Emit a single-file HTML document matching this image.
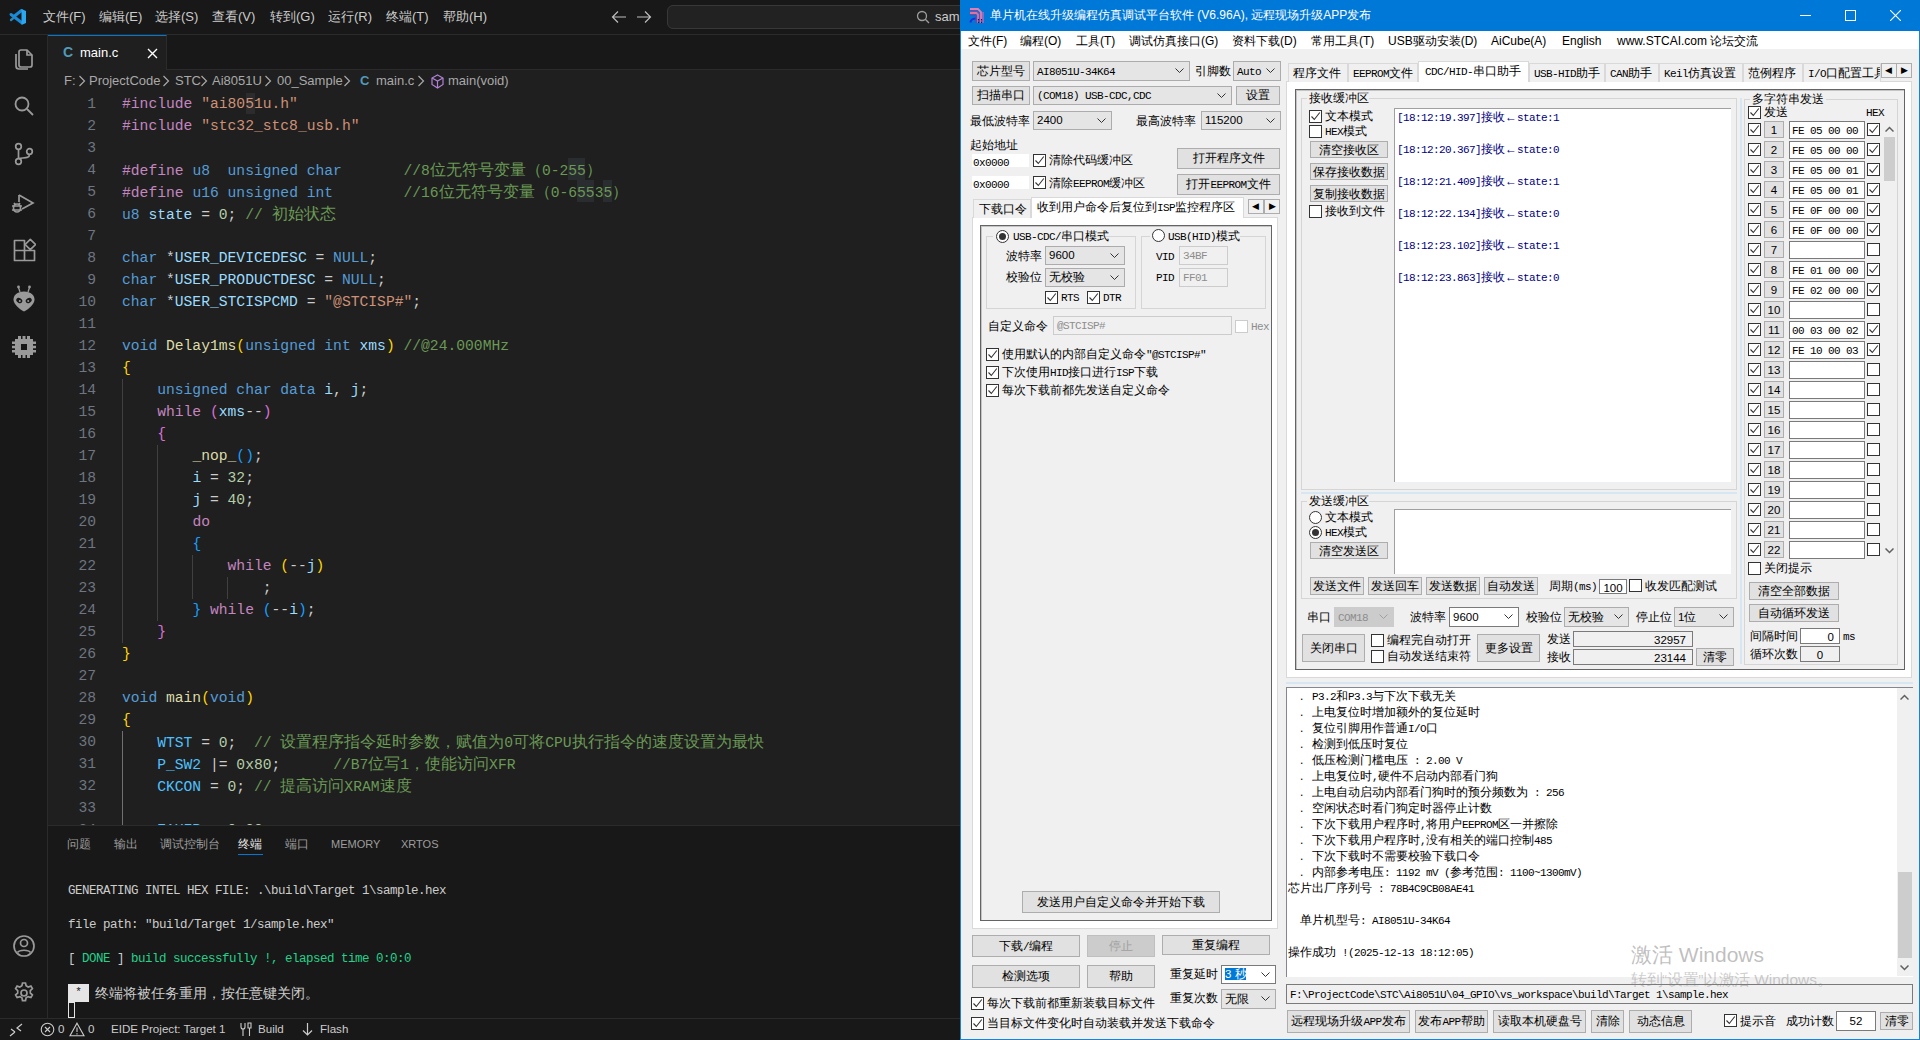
<!DOCTYPE html>
<html><head><meta charset="utf-8"><style>
html,body{margin:0;padding:0;width:1920px;height:1040px;overflow:hidden;background:#1f1f1f;position:relative;font-family:"Liberation Sans",sans-serif}
i.c{font-style:normal;display:inline-block;width:1em;text-align:center}

#vs{position:absolute;left:0;top:0;width:960px;height:1040px;background:#1f1f1f;overflow:hidden;font-family:"Liberation Sans",sans-serif}
#vs .tb{position:absolute;left:0;top:0;width:960px;height:34px;background:#181818;border-bottom:1px solid #2b2b2b}
#vs .mi{position:absolute;top:9px;font-size:13px;color:#cccccc;line-height:16px;white-space:nowrap}
#vs .search{position:absolute;left:667px;top:5px;width:300px;height:22px;background:#222222;border:1px solid #383838;border-radius:6px}
#vs .ab{position:absolute;left:0;top:35px;width:47px;height:983px;background:#181818;border-right:1px solid #2b2b2b}
#vs .ab svg{}
#vs .tabs{position:absolute;left:48px;top:35px;width:912px;height:34px;background:#181818;border-bottom:1px solid #2b2b2b}
#vs .tab{position:absolute;left:0;top:0;width:119px;height:35px;background:#1f1f1f;border-top:1px solid #0078d4;border-right:1px solid #2b2b2b;box-sizing:border-box}
#vs .bc{position:absolute;top:72px;font-size:13px;color:#a9a9a9;white-space:nowrap;line-height:18px}
#vs .bc .chev{font-size:17px;line-height:14px;margin:0;vertical-align:-1px}
#vs .editor{position:absolute;left:48px;top:0;width:912px;height:825px;overflow:hidden}
#vs .ln{position:absolute;left:0;width:48px;text-align:right;font-family:"Liberation Mono",monospace;font-size:14.67px;line-height:22px;color:#6e7681}
#vs .cl{position:absolute;z-index:2;left:74px;font-family:"Liberation Mono",monospace;font-size:14.67px;line-height:22px;white-space:pre;color:#cccccc}
#vs .cj{font-size:16px;font-family:"Liberation Sans",sans-serif}
#vs .guide{position:absolute;width:1px;background:#404040}
#vs .panel{position:absolute;left:48px;top:825px;width:912px;height:193px;background:#181818;border-top:1px solid #2b2b2b;box-sizing:border-box}
#vs .ptab{position:absolute;top:11px;font-size:12px;color:#9d9d9d;line-height:14px;white-space:nowrap}
#vs .term{position:absolute;left:20px;font-family:"Liberation Mono",monospace;font-size:12.5px;letter-spacing:-0.5px;line-height:16px;color:#cccccc;white-space:pre}
#vs .sb{position:absolute;left:0;top:1018px;width:960px;height:22px;background:#181818;border-top:1px solid #2b2b2b;box-sizing:border-box;color:#cccccc;font-size:11.6px}
#vs .sb span{line-height:14px;white-space:nowrap}

.t{position:absolute;font-size:12px;line-height:16px;color:#000;white-space:nowrap;font-family:"Liberation Sans",sans-serif}
.y{position:absolute;font-size:11.5px;line-height:16px;color:#000;white-space:nowrap;font-family:"Liberation Sans",sans-serif}
span.t,span.y{position:static;color:inherit}
.a{font-family:"Liberation Mono",monospace;font-size:11px;letter-spacing:-0.6px}
.btn,.cmb,.ed{position:absolute;box-sizing:border-box;border:1px solid;white-space:nowrap;overflow:hidden;font-family:"Liberation Sans",sans-serif;font-size:12px}
.btn{text-align:center}
.cb{position:absolute;width:13px;height:13px;box-sizing:border-box;border:1px solid #333;background:#fff}
.cb svg{left:0;top:0}
.rd{position:absolute;width:13px;height:13px;box-sizing:border-box;border:1px solid #333;border-radius:50%;background:#fff}

</style></head><body>

<div id="vs">
  <div class="tb">
    <svg style="position:absolute;left:8px;top:8px" width="20" height="18" viewBox="0 0 20 18" fill="none" stroke-linecap="round"><path d="M3 6.5l10.5 8" stroke="#1b8ad6" stroke-width="3"/><path d="M13.5 2.5L6.5 8" stroke="#1b8ad6" stroke-width="3"/><path d="M3 12l2.3-1.8" stroke="#2a86b8" stroke-width="2.3"/><path fill="#2aa7f0" d="M13.5 1l4.5 2v12l-4.5 2z"/></svg>
    <div class="mi" style="left:43px"><i class="c">文</i><i class="c">件</i>(F)</div>
    <div class="mi" style="left:99px"><i class="c">编</i><i class="c">辑</i>(E)</div>
    <div class="mi" style="left:155px"><i class="c">选</i><i class="c">择</i>(S)</div>
    <div class="mi" style="left:212px"><i class="c">查</i><i class="c">看</i>(V)</div>
    <div class="mi" style="left:270px"><i class="c">转</i><i class="c">到</i>(G)</div>
    <div class="mi" style="left:328px"><i class="c">运</i><i class="c">行</i>(R)</div>
    <div class="mi" style="left:386px"><i class="c">终</i><i class="c">端</i>(T)</div>
    <div class="mi" style="left:443px"><i class="c">帮</i><i class="c">助</i>(H)</div>
    <svg style="position:absolute;left:611px;top:10px" width="16" height="14" viewBox="0 0 16 14" fill="none" stroke="#bdbdbd" stroke-width="1.2"><path d="M15 7H2M7 1.5L1.5 7 7 12.5"/></svg>
    <svg style="position:absolute;left:636px;top:10px" width="16" height="14" viewBox="0 0 16 14" fill="none" stroke="#bdbdbd" stroke-width="1.2"><path d="M1 7h13M9 1.5L14.5 7 9 12.5"/></svg>
    <div class="search"></div>
    <svg style="position:absolute;left:916px;top:10px" width="14" height="14" viewBox="0 0 14 14" fill="none" stroke="#9d9d9d" stroke-width="1.3"><circle cx="6" cy="6" r="4.5"/><path d="M9.3 9.3L13 13"/></svg>
    <div class="mi" style="left:935px;color:#cccccc">sample</div>
  </div>
  <div class="ab">
<svg style="position:absolute;left:12px;top:12px" width="24" height="24" viewBox="0 0 24 24" fill="none" stroke="#9a9a9a" stroke-width="1.7"><path d="M9 3h6l5 5v10a2 2 0 0 1-2 2H9a2 2 0 0 1-2-2V5a2 2 0 0 1 2-2z"/><path d="M15 3v5h5"/><path d="M4 7v12a3 3 0 0 0 3 3h9"/></svg>
<svg style="position:absolute;left:12px;top:59px" width="24" height="24" viewBox="0 0 24 24" fill="none" stroke="#9a9a9a" stroke-width="1.8"><circle cx="10" cy="10" r="6.5"/><path d="M15 15l6 6"/></svg>
<svg style="position:absolute;left:12px;top:107px" width="24" height="24" viewBox="0 0 24 24" fill="none" stroke="#9a9a9a" stroke-width="1.7"><circle cx="6.5" cy="4.5" r="2.8"/><circle cx="6.5" cy="19.5" r="2.8"/><circle cx="17.5" cy="9.5" r="2.8"/><path d="M6.5 7.3v9.4M17.5 12.3c0 3.5-3 3.5-7 3.7-2.5.1-4 .5-4 .7"/></svg>
<svg style="position:absolute;left:10px;top:156px" width="26" height="24" viewBox="0 0 26 24" fill="none" stroke="#9a9a9a" stroke-width="1.7"><path d="M9 4l14 8-11 6"/><path d="M9 4v7"/><ellipse cx="7" cy="17" rx="3.5" ry="4"/><path d="M2 15h10M2 19h10M4 12l1.5 2M10 12l-1.5 2"/></svg>
<svg style="position:absolute;left:12px;top:203px" width="24" height="24" viewBox="0 0 24 24" fill="none" stroke="#9a9a9a" stroke-width="1.7" stroke-linejoin="round"><path d="M2.5 2.5h10v20h-10zM2.5 12.5h20v10h-10"/><path d="M18.3 1.3l5.2 5.2-5.2 5.2-5.2-5.2z"/></svg>
<svg style="position:absolute;left:11px;top:250px" width="26" height="27" viewBox="0 0 26 27"><path fill="#9a9a9a" d="M13 6.5C6 6.5 2.5 10.5 2.5 14.5 2.5 19 8 24 13 26.5 18 24 23.5 19 23.5 14.5 23.5 10.5 20 6.5 13 6.5z"/><path d="M9 7L7.5 2.5M17 7l1.5-4.5" stroke="#9a9a9a" stroke-width="1.3"/><circle cx="7.5" cy="2" r="1.4" fill="#9a9a9a"/><circle cx="18.5" cy="2" r="1.4" fill="#9a9a9a"/><ellipse cx="8.3" cy="15.5" rx="3.2" ry="2.4" transform="rotate(35 8.3 15.5)" fill="#181818"/><ellipse cx="17.7" cy="15.5" rx="3.2" ry="2.4" transform="rotate(-35 17.7 15.5)" fill="#181818"/><circle cx="8.8" cy="16" r="1" fill="#9a9a9a"/><circle cx="17.2" cy="16" r="1" fill="#9a9a9a"/></svg>
<svg style="position:absolute;left:11px;top:299px" width="26" height="26" viewBox="0 0 26 26" fill="#9a9a9a"><path d="M4 5h18v16H4z"/><rect x="10" y="10" width="6" height="6" fill="#181818"/><path d="M7 2h3v4H7zM11.5 2h3v4h-3zM16 2h3v4h-3zM7 20h3v4H7zM11.5 20h3v4h-3zM16 20h3v4h-3zM1 7.5h4v2.5H1zM1 11.8h4v2.5H1zM1 16h4v2.5H1zM21 7.5h4v2.5h-4zM21 11.8h4v2.5h-4zM21 16h4v2.5h-4z"/></svg>
<svg style="position:absolute;left:12px;top:899px" width="24" height="24" viewBox="0 0 24 24" fill="none" stroke="#9a9a9a" stroke-width="1.7"><circle cx="12" cy="12" r="10"/><circle cx="12" cy="9" r="3.5"/><path d="M5.5 18.5c2-3 11-3 13 0"/></svg>
<svg style="position:absolute;left:12px;top:946px" width="24" height="24" viewBox="0 0 24 24" fill="none" stroke="#9a9a9a" stroke-width="1.7"><circle cx="12" cy="12" r="3"/><path d="M10.5 2h3l.6 2.8 2.1 1.2 2.7-.9 1.5 2.6-2.1 1.9v2.4l2.1 1.9-1.5 2.6-2.7-.9-2.1 1.2-.6 2.8h-3l-.6-2.8-2.1-1.2-2.7.9-1.5-2.6 2.1-1.9V9.6L3.6 7.7l1.5-2.6 2.7.9 2.1-1.2z"/></svg>
  </div>
  <div class="tabs">
    <div class="tab">
      <span style="position:absolute;left:15px;top:8px;color:#519aba;font-weight:bold;font-size:14px;font-family:'Liberation Sans',sans-serif">C</span>
      <span style="position:absolute;left:32px;top:9px;color:#ffffff;font-size:13px">main.c</span>
      <svg style="position:absolute;left:99px;top:12px" width="11" height="11" viewBox="0 0 11 11" stroke="#ffffff" stroke-width="1.4"><path d="M1 1l9 9M10 1l-9 9"/></svg>
    </div>
  </div>
  <div class="bc" style="left:64px">F:</div><div class="bc" style="left:89px">ProjectCode</div><div class="bc" style="left:175px">STC</div><div class="bc" style="left:212px">Ai8051U</div><div class="bc" style="left:277px">00_Sample</div><div class="bc" style="left:376px">main.c</div><div class="bc" style="left:448px">main(void)</div><svg style="position:absolute;left:78px;top:75px" width="8" height="12" viewBox="0 0 8 12" fill="none" stroke="#a9a9a9" stroke-width="1.2"><path d="M1.5 1l5 5-5 5"/></svg><svg style="position:absolute;left:162px;top:75px" width="8" height="12" viewBox="0 0 8 12" fill="none" stroke="#a9a9a9" stroke-width="1.2"><path d="M1.5 1l5 5-5 5"/></svg><svg style="position:absolute;left:200px;top:75px" width="8" height="12" viewBox="0 0 8 12" fill="none" stroke="#a9a9a9" stroke-width="1.2"><path d="M1.5 1l5 5-5 5"/></svg><svg style="position:absolute;left:264px;top:75px" width="8" height="12" viewBox="0 0 8 12" fill="none" stroke="#a9a9a9" stroke-width="1.2"><path d="M1.5 1l5 5-5 5"/></svg><svg style="position:absolute;left:343px;top:75px" width="8" height="12" viewBox="0 0 8 12" fill="none" stroke="#a9a9a9" stroke-width="1.2"><path d="M1.5 1l5 5-5 5"/></svg><svg style="position:absolute;left:417px;top:75px" width="8" height="12" viewBox="0 0 8 12" fill="none" stroke="#a9a9a9" stroke-width="1.2"><path d="M1.5 1l5 5-5 5"/></svg><div class="bc" style="left:360px;color:#519aba;font-weight:bold">C</div><svg style="position:absolute;left:430px;top:74px" width="15" height="15" viewBox="0 0 15 15" fill="none" stroke="#b180d7" stroke-width="1.2"><path d="M7.5 1l5.5 3v6.5L7.5 14 2 10.5V4z"/><path d="M2 4l5.5 3 5.5-3M7.5 7v7"/></svg>
  <div class="editor">
<div class="ln" style="top:93px">1</div>
<div class="cl" style="top:93px"><span style="color:#c586c0">#include </span><span style="color:#ce9178">"ai8051u.h"</span></div>
<div class="ln" style="top:115px">2</div>
<div class="cl" style="top:115px"><span style="color:#c586c0">#include </span><span style="color:#ce9178">"stc32_stc8_usb.h"</span></div>
<div class="ln" style="top:137px">3</div>
<div class="cl" style="top:137px"></div>
<div class="ln" style="top:159px">4</div>
<div class="cl" style="top:159px"><span style="color:#c586c0">#define </span><span style="color:#569cd6">u8</span><span style="color:#cccccc">  </span><span style="color:#569cd6">unsigned char</span><span style="color:#cccccc">       </span><span style="color:#6a9955">//8<span class="cj"><i class="c">位</i><i class="c">无</i><i class="c">符</i><i class="c">号</i><i class="c">变</i><i class="c">量</i><i class="c">（</i></span>0-255<span class="cj"><i class="c">）</i></span></span></div>
<div class="ln" style="top:181px">5</div>
<div class="cl" style="top:181px"><span style="color:#c586c0">#define </span><span style="color:#569cd6">u16</span><span style="color:#cccccc"> </span><span style="color:#569cd6">unsigned int</span><span style="color:#cccccc">        </span><span style="color:#6a9955">//16<span class="cj"><i class="c">位</i><i class="c">无</i><i class="c">符</i><i class="c">号</i><i class="c">变</i><i class="c">量</i><i class="c">（</i></span>0-65535<span class="cj"><i class="c">）</i></span></span></div>
<div class="ln" style="top:203px">6</div>
<div class="cl" style="top:203px"><span style="color:#569cd6">u8</span><span style="color:#cccccc"> </span><span style="color:#9cdcfe">state</span><span style="color:#cccccc"> = </span><span style="color:#b5cea8">0</span><span style="color:#cccccc">; </span><span style="color:#6a9955">// <span class="cj"><i class="c">初</i><i class="c">始</i><i class="c">状</i><i class="c">态</i></span></span></div>
<div class="ln" style="top:225px">7</div>
<div class="cl" style="top:225px"></div>
<div class="ln" style="top:247px">8</div>
<div class="cl" style="top:247px"><span style="color:#569cd6">char</span><span style="color:#cccccc"> *</span><span style="color:#9cdcfe">USER_DEVICEDESC</span><span style="color:#cccccc"> = </span><span style="color:#569cd6">NULL</span><span style="color:#cccccc">;</span></div>
<div class="ln" style="top:269px">9</div>
<div class="cl" style="top:269px"><span style="color:#569cd6">char</span><span style="color:#cccccc"> *</span><span style="color:#9cdcfe">USER_PRODUCTDESC</span><span style="color:#cccccc"> = </span><span style="color:#569cd6">NULL</span><span style="color:#cccccc">;</span></div>
<div class="ln" style="top:291px">10</div>
<div class="cl" style="top:291px"><span style="color:#569cd6">char</span><span style="color:#cccccc"> *</span><span style="color:#9cdcfe">USER_STCISPCMD</span><span style="color:#cccccc"> = </span><span style="color:#ce9178">"@STCISP#"</span><span style="color:#cccccc">;</span></div>
<div class="ln" style="top:313px">11</div>
<div class="cl" style="top:313px"></div>
<div class="ln" style="top:335px">12</div>
<div class="cl" style="top:335px"><span style="color:#569cd6">void</span><span style="color:#cccccc"> </span><span style="color:#dcdcaa">Delay1ms</span><span style="color:#ffd700">(</span><span style="color:#569cd6">unsigned int</span><span style="color:#cccccc"> </span><span style="color:#9cdcfe">xms</span><span style="color:#ffd700">)</span><span style="color:#cccccc"> </span><span style="color:#6a9955">//@24.000MHz</span></div>
<div class="ln" style="top:357px">13</div>
<div class="cl" style="top:357px"><span style="color:#ffd700">{</span></div>
<div class="ln" style="top:379px">14</div>
<div class="cl" style="top:379px"><span style="color:#cccccc">    </span><span style="color:#569cd6">unsigned char data</span><span style="color:#cccccc"> </span><span style="color:#9cdcfe">i</span><span style="color:#cccccc">, </span><span style="color:#9cdcfe">j</span><span style="color:#cccccc">;</span></div>
<div class="ln" style="top:401px">15</div>
<div class="cl" style="top:401px"><span style="color:#cccccc">    </span><span style="color:#c586c0">while</span><span style="color:#cccccc"> </span><span style="color:#da70d6">(</span><span style="color:#9cdcfe">xms</span><span style="color:#cccccc">--</span><span style="color:#da70d6">)</span></div>
<div class="ln" style="top:423px">16</div>
<div class="cl" style="top:423px"><span style="color:#cccccc">    </span><span style="color:#da70d6">{</span></div>
<div class="ln" style="top:445px">17</div>
<div class="cl" style="top:445px"><span style="color:#cccccc">        </span><span style="color:#dcdcaa">_nop_</span><span style="color:#179fff">()</span><span style="color:#cccccc">;</span></div>
<div class="ln" style="top:467px">18</div>
<div class="cl" style="top:467px"><span style="color:#cccccc">        </span><span style="color:#9cdcfe">i</span><span style="color:#cccccc"> = </span><span style="color:#b5cea8">32</span><span style="color:#cccccc">;</span></div>
<div class="ln" style="top:489px">19</div>
<div class="cl" style="top:489px"><span style="color:#cccccc">        </span><span style="color:#9cdcfe">j</span><span style="color:#cccccc"> = </span><span style="color:#b5cea8">40</span><span style="color:#cccccc">;</span></div>
<div class="ln" style="top:511px">20</div>
<div class="cl" style="top:511px"><span style="color:#cccccc">        </span><span style="color:#c586c0">do</span></div>
<div class="ln" style="top:533px">21</div>
<div class="cl" style="top:533px"><span style="color:#cccccc">        </span><span style="color:#179fff">{</span></div>
<div class="ln" style="top:555px">22</div>
<div class="cl" style="top:555px"><span style="color:#cccccc">            </span><span style="color:#c586c0">while</span><span style="color:#cccccc"> </span><span style="color:#ffd700">(</span><span style="color:#cccccc">--</span><span style="color:#9cdcfe">j</span><span style="color:#ffd700">)</span></div>
<div class="ln" style="top:577px">23</div>
<div class="cl" style="top:577px"><span style="color:#cccccc">                </span><span style="color:#cccccc">;</span></div>
<div class="ln" style="top:599px">24</div>
<div class="cl" style="top:599px"><span style="color:#cccccc">        </span><span style="color:#179fff">}</span><span style="color:#cccccc"> </span><span style="color:#c586c0">while</span><span style="color:#cccccc"> </span><span style="color:#179fff">(</span><span style="color:#cccccc">--</span><span style="color:#9cdcfe">i</span><span style="color:#179fff">)</span><span style="color:#cccccc">;</span></div>
<div class="ln" style="top:621px">25</div>
<div class="cl" style="top:621px"><span style="color:#cccccc">    </span><span style="color:#da70d6">}</span></div>
<div class="ln" style="top:643px">26</div>
<div class="cl" style="top:643px"><span style="color:#ffd700">}</span></div>
<div class="ln" style="top:665px">27</div>
<div class="cl" style="top:665px"></div>
<div class="ln" style="top:687px">28</div>
<div class="cl" style="top:687px"><span style="color:#569cd6">void</span><span style="color:#cccccc"> </span><span style="color:#dcdcaa">main</span><span style="color:#ffd700">(</span><span style="color:#569cd6">void</span><span style="color:#ffd700">)</span></div>
<div class="ln" style="top:709px">29</div>
<div class="cl" style="top:709px"><span style="color:#ffd700">{</span></div>
<div class="ln" style="top:731px">30</div>
<div class="cl" style="top:731px"><span style="color:#cccccc">    </span><span style="color:#4fc1ff">WTST</span><span style="color:#cccccc"> = </span><span style="color:#b5cea8">0</span><span style="color:#cccccc">;  </span><span style="color:#6a9955">// <span class="cj"><i class="c">设</i><i class="c">置</i><i class="c">程</i><i class="c">序</i><i class="c">指</i><i class="c">令</i><i class="c">延</i><i class="c">时</i><i class="c">参</i><i class="c">数</i><i class="c">，</i><i class="c">赋</i><i class="c">值</i><i class="c">为</i></span>0<span class="cj"><i class="c">可</i><i class="c">将</i></span>CPU<span class="cj"><i class="c">执</i><i class="c">行</i><i class="c">指</i><i class="c">令</i><i class="c">的</i><i class="c">速</i><i class="c">度</i><i class="c">设</i><i class="c">置</i><i class="c">为</i><i class="c">最</i><i class="c">快</i></span></span></div>
<div class="ln" style="top:753px">31</div>
<div class="cl" style="top:753px"><span style="color:#cccccc">    </span><span style="color:#4fc1ff">P_SW2</span><span style="color:#cccccc"> |= </span><span style="color:#b5cea8">0x80</span><span style="color:#cccccc">;</span><span style="color:#cccccc">      </span><span style="color:#6a9955">//B7<span class="cj"><i class="c">位</i><i class="c">写</i></span>1<span class="cj"><i class="c">，</i><i class="c">使</i><i class="c">能</i><i class="c">访</i><i class="c">问</i></span>XFR</span></div>
<div class="ln" style="top:775px">32</div>
<div class="cl" style="top:775px"><span style="color:#cccccc">    </span><span style="color:#4fc1ff">CKCON</span><span style="color:#cccccc"> = </span><span style="color:#b5cea8">0</span><span style="color:#cccccc">; </span><span style="color:#6a9955">// <span class="cj"><i class="c">提</i><i class="c">高</i><i class="c">访</i><i class="c">问</i></span>XRAM<span class="cj"><i class="c">速</i><i class="c">度</i></span></span></div>
<div class="ln" style="top:797px">33</div>
<div class="cl" style="top:797px"></div>
<div class="ln" style="top:819px">34</div>
<div class="cl" style="top:819px"><span style="color:#cccccc">    </span><span style="color:#4fc1ff">EAXFR</span><span style="color:#cccccc"> = </span><span style="color:#b5cea8">0x00</span><span style="color:#cccccc">;</span></div>
    <div style="position:absolute;left:198px;top:93px;width:9px;height:21px;background:#2c2c2c"></div>
    <div style="position:absolute;left:520px;top:158px;width:17px;height:22px;background:#2a2d30"></div>
    <div style="position:absolute;left:529px;top:180px;width:17px;height:22px;background:#2a2d30"></div>
    <div style="position:absolute;left:555px;top:180px;width:9px;height:22px;background:#2a2d30"></div>
    <div class="guide" style="left:74px;top:379px;height:264px"></div>
    <div class="guide" style="left:109px;top:445px;height:176px"></div>
    <div class="guide" style="left:144px;top:555px;height:44px"></div>
    <div class="guide" style="left:179px;top:577px;height:22px"></div>
    <div class="guide" style="left:74px;top:731px;height:100px;background:#707070"></div>
  </div>
  <div class="panel">
    <div class="ptab" style="left:19px"><i class="c">问</i><i class="c">题</i></div>
    <div class="ptab" style="left:66px"><i class="c">输</i><i class="c">出</i></div>
    <div class="ptab" style="left:112px"><i class="c">调</i><i class="c">试</i><i class="c">控</i><i class="c">制</i><i class="c">台</i></div>
    <div class="ptab" style="left:190px;color:#e7e7e7"><i class="c">终</i><i class="c">端</i></div>
    <div style="position:absolute;left:190px;top:28px;width:25px;height:1px;background:#0078d4"></div>
    <div class="ptab" style="left:237px"><i class="c">端</i><i class="c">口</i></div>
    <div class="ptab" style="left:283px;font-size:11px">MEMORY</div>
    <div class="ptab" style="left:353px;font-size:11px">XRTOS</div>
    <div class="term" style="top:57px">GENERATING INTEL HEX FILE: .\build\Target 1\sample.hex</div>
    <div class="term" style="top:91px">file path: "build/Target 1/sample.hex"</div>
    <div class="term" style="top:125px">[ <span style="color:#23d18b">DONE</span> ] <span style="color:#23d18b">build successfully !, elapsed time 0:0:0</span></div>
    <div style="position:absolute;left:20px;top:158px;width:21px;height:18px;background:#e5e5e5;color:#181818;font-size:11px;text-align:center;line-height:16px;font-family:'Liberation Mono',monospace">*</div>
    <div class="term" style="top:159px;left:47px;font-family:'Liberation Sans',sans-serif;font-size:14px"><i class="c">终</i><i class="c">端</i><i class="c">将</i><i class="c">被</i><i class="c">任</i><i class="c">务</i><i class="c">重</i><i class="c">用</i><i class="c">，</i><i class="c">按</i><i class="c">任</i><i class="c">意</i><i class="c">键</i><i class="c">关</i><i class="c">闭</i><i class="c">。</i></div>
    <div style="position:absolute;left:20px;top:176px;width:7px;height:16px;border:1px solid #e5e5e5;box-sizing:border-box"></div>
  </div>
  <div class="sb">
    <svg style="position:absolute;left:9px;top:4px" width="14" height="14" viewBox="0 0 14 14" fill="none" stroke="#cccccc" stroke-width="1.2"><path d="M1 13l5-4M6 9L2 6M13 1L8 5l4 3"/></svg>
    <svg style="position:absolute;left:40px;top:3px" width="15" height="15" viewBox="0 0 15 15" fill="none" stroke="#cccccc" stroke-width="1.1"><circle cx="7.5" cy="7.5" r="6.3"/><path d="M5 5l5 5M10 5l-5 5"/></svg>
    <span style="position:absolute;left:58px;top:3px">0</span>
    <svg style="position:absolute;left:69px;top:3px" width="16" height="15" viewBox="0 0 16 15" fill="none" stroke="#cccccc" stroke-width="1.1"><path d="M8 1.2L15 13.8H1z"/><path d="M8 5.5v4.5M8 11.3v1.2"/></svg>
    <span style="position:absolute;left:88px;top:3px">0</span>
    <span style="position:absolute;left:111px;top:3px">EIDE Project: Target 1</span>
    <svg style="position:absolute;left:239px;top:3px" width="14" height="15" viewBox="0 0 14 15" fill="none" stroke="#cccccc" stroke-width="1.1"><path d="M2 1v4a2 2 0 0 0 4 0V1M4 7v7M9 1h3v5H9zM10.5 6v8"/></svg>
    <span style="position:absolute;left:258px;top:3px">Build</span>
    <svg style="position:absolute;left:302px;top:3px" width="11" height="15" viewBox="0 0 11 15" fill="none" stroke="#cccccc" stroke-width="1.2"><path d="M5.5 1v12M1 8.5l4.5 4.5L10 8.5"/></svg>
    <span style="position:absolute;left:320px;top:3px">Flash</span>
  </div>
</div>
<div style="position:absolute;left:960px;top:0px;width:960px;height:1040px;box-sizing:border-box;background:#f0f0f0;border:1px solid #1883d7;border-top:0"></div>
<div style="position:absolute;left:960px;top:0px;width:960px;height:31px;box-sizing:border-box;background:#0078d7"></div>
<svg style="position:absolute;left:969px;top:7px" width="16" height="16" viewBox="0 0 16 16" fill="none"><path d="M1 2h8l3 3v11" stroke="#e27fb0" stroke-width="1.8"/><path d="M1 4.3h7l2 2v9.7" stroke="#9b3f9c" stroke-width="1"/><path d="M1 6h6.5l1.5 1.5V16" stroke="#e0709f" stroke-width="1.8"/><path d="M1 8.3h5.5l0.5 .5V16" stroke="#7a3d9a" stroke-width="1"/><path d="M14 5v11" stroke="#b06ab8" stroke-width="1.5"/><path d="M1.5 15.5c0-2 2-4 5-4" stroke="#1d2fd8" stroke-width="2.2"/><path d="M9.5 12v1.5M9.5 14.5V16M12.5 12v1.5M12.5 14.5V16" stroke="#2a1060" stroke-width="1.2"/></svg>
<div style="position:absolute;left:990px;top:7px;color:#fff;font-size:12px;line-height:16px;white-space:nowrap"><i class="c">单</i><i class="c">片</i><i class="c">机</i><i class="c">在</i><i class="c">线</i><i class="c">升</i><i class="c">级</i><i class="c">编</i><i class="c">程</i><i class="c">仿</i><i class="c">真</i><i class="c">调</i><i class="c">试</i><i class="c">平</i><i class="c">台</i><i class="c">软</i><i class="c">件</i> (V6.96A), <i class="c">远</i><i class="c">程</i><i class="c">现</i><i class="c">场</i><i class="c">升</i><i class="c">级</i>APP<i class="c">发</i><i class="c">布</i></div>
<div style="position:absolute;left:1800px;top:15px;width:11px;height:1px;box-sizing:border-box;background:#fff"></div>
<div style="position:absolute;left:1845px;top:10px;width:11px;height:11px;box-sizing:border-box;border:1px solid #fff"></div>
<svg style="position:absolute;left:1890px;top:10px" width="11" height="11" viewBox="0 0 11 11" stroke="#fff" stroke-width="1.1"><path d="M0 0l11 11M11 0L0 11"/></svg>
<div style="position:absolute;left:961px;top:31px;width:958px;height:18px;box-sizing:border-box;background:#ffffff"></div>
<div class="y" style="left:968px;top:33px;font-size:12px"><i class="c">文</i><i class="c">件</i>(F)</div>
<div class="y" style="left:1020px;top:33px;font-size:12px"><i class="c">编</i><i class="c">程</i>(O)</div>
<div class="y" style="left:1076px;top:33px;font-size:12px"><i class="c">工</i><i class="c">具</i>(T)</div>
<div class="y" style="left:1129px;top:33px;font-size:12px"><i class="c">调</i><i class="c">试</i><i class="c">仿</i><i class="c">真</i><i class="c">接</i><i class="c">口</i>(G)</div>
<div class="y" style="left:1232px;top:33px;font-size:12px"><i class="c">资</i><i class="c">料</i><i class="c">下</i><i class="c">载</i>(D)</div>
<div class="y" style="left:1311px;top:33px;font-size:12px"><i class="c">常</i><i class="c">用</i><i class="c">工</i><i class="c">具</i>(T)</div>
<div class="y" style="left:1388px;top:33px;font-size:12px">USB<i class="c">驱</i><i class="c">动</i><i class="c">安</i><i class="c">装</i>(D)</div>
<div class="y" style="left:1491px;top:33px;font-size:12px">AiCube(A)</div>
<div class="y" style="left:1562px;top:33px;font-size:12px">English</div>
<div class="y" style="left:1617px;top:33px;font-size:12px">www.STCAI.com <i class="c">论</i><i class="c">坛</i><i class="c">交</i><i class="c">流</i></div>
<div class="btn" style="left:972px;top:61px;width:58px;height:20px;background:#e1e1e1;border-color:#adadad;color:#000;line-height:18px"><span class="t"><i class="c">芯</i><i class="c">片</i><i class="c">型</i><i class="c">号</i></span></div>
<div class="cmb" style="left:1033px;top:61px;width:157px;height:20px;background:#e5e5e5;border-color:#acacac;color:#000;line-height:18px"><span class="t" style="padding-left:3px"><span class="a">AI8051U-34K64</span></span><svg style="position:absolute;right:5px;top:50%;margin-top:-3px" width="9" height="5" viewBox="0 0 9 5" fill="none" stroke="#333" stroke-width="1"><path d="M.5 .5l4 4 4-4"/></svg></div>
<div class="t" style="left:1195px;top:63px;"><i class="c">引</i><i class="c">脚</i><i class="c">数</i></div>
<div class="cmb" style="left:1233px;top:61px;width:48px;height:20px;background:#e5e5e5;border-color:#acacac;color:#000;line-height:18px"><span class="t" style="padding-left:3px"><span class="a">Auto</span></span><svg style="position:absolute;right:5px;top:50%;margin-top:-3px" width="9" height="5" viewBox="0 0 9 5" fill="none" stroke="#333" stroke-width="1"><path d="M.5 .5l4 4 4-4"/></svg></div>
<div class="btn" style="left:972px;top:86px;width:58px;height:19px;background:#e1e1e1;border-color:#adadad;color:#000;line-height:17px"><span class="t"><i class="c">扫</i><i class="c">描</i><i class="c">串</i><i class="c">口</i></span></div>
<div class="cmb" style="left:1033px;top:86px;width:199px;height:19px;background:#e5e5e5;border-color:#acacac;color:#000;line-height:17px"><span class="t" style="padding-left:3px"><span class="a">(COM18) USB-CDC,CDC</span></span><svg style="position:absolute;right:5px;top:50%;margin-top:-3px" width="9" height="5" viewBox="0 0 9 5" fill="none" stroke="#333" stroke-width="1"><path d="M.5 .5l4 4 4-4"/></svg></div>
<div class="btn" style="left:1236px;top:86px;width:44px;height:19px;background:#e1e1e1;border-color:#adadad;color:#000;line-height:17px"><span class="t"><i class="c">设</i><i class="c">置</i></span></div>
<div class="t" style="left:970px;top:113px;"><i class="c">最</i><i class="c">低</i><i class="c">波</i><i class="c">特</i><i class="c">率</i></div>
<div class="cmb" style="left:1033px;top:111px;width:79px;height:19px;background:#e5e5e5;border-color:#acacac;color:#000;line-height:17px"><span class="y" style="padding-left:3px">2400</span><svg style="position:absolute;right:5px;top:50%;margin-top:-3px" width="9" height="5" viewBox="0 0 9 5" fill="none" stroke="#333" stroke-width="1"><path d="M.5 .5l4 4 4-4"/></svg></div>
<div class="t" style="left:1136px;top:113px;"><i class="c">最</i><i class="c">高</i><i class="c">波</i><i class="c">特</i><i class="c">率</i></div>
<div class="cmb" style="left:1201px;top:111px;width:80px;height:19px;background:#e5e5e5;border-color:#acacac;color:#000;line-height:17px"><span class="y" style="padding-left:3px">115200</span><svg style="position:absolute;right:5px;top:50%;margin-top:-3px" width="9" height="5" viewBox="0 0 9 5" fill="none" stroke="#333" stroke-width="1"><path d="M.5 .5l4 4 4-4"/></svg></div>
<div class="t" style="left:970px;top:137px;"><i class="c">起</i><i class="c">始</i><i class="c">地</i><i class="c">址</i></div>
<div class="ed" style="left:971px;top:153px;width:59px;height:15px;background:#ffffff;border-color:#f0f0f0;color:#000;text-align:left;line-height:13px;padding:0 1px"><span class="t"><span class="a">0x0000</span></span></div>
<div class="cb" style="left:1033px;top:154px;border-color:#333333"><svg width="11" height="11" viewBox="0 0 11 11" style="position:absolute;left:0;top:0" fill="none" stroke="#333" stroke-width="1.1"><path d="M1.5 5.5l2.8 3 5.5-7"/></svg></div>
<div class="t" style="left:1049px;top:152px;"><i class="c">清</i><i class="c">除</i><i class="c">代</i><i class="c">码</i><i class="c">缓</i><i class="c">冲</i><i class="c">区</i></div>
<div class="btn" style="left:1177px;top:148px;width:103px;height:21px;background:#e1e1e1;border-color:#adadad;color:#000;line-height:19px"><span class="t"><i class="c">打</i><i class="c">开</i><i class="c">程</i><i class="c">序</i><i class="c">文</i><i class="c">件</i></span></div>
<div class="ed" style="left:971px;top:175px;width:59px;height:15px;background:#ffffff;border-color:#f0f0f0;color:#000;text-align:left;line-height:13px;padding:0 1px"><span class="t"><span class="a">0x0000</span></span></div>
<div class="cb" style="left:1033px;top:176px;border-color:#333333"><svg width="11" height="11" viewBox="0 0 11 11" style="position:absolute;left:0;top:0" fill="none" stroke="#333" stroke-width="1.1"><path d="M1.5 5.5l2.8 3 5.5-7"/></svg></div>
<div class="t" style="left:1049px;top:175px;"><i class="c">清</i><i class="c">除</i><span class="a">EEPROM</span><i class="c">缓</i><i class="c">冲</i><i class="c">区</i></div>
<div class="btn" style="left:1177px;top:174px;width:103px;height:21px;background:#e1e1e1;border-color:#adadad;color:#000;line-height:19px"><span class="t"><i class="c">打</i><i class="c">开</i><span class="a">EEPROM</span><i class="c">文</i><i class="c">件</i></span></div>
<div style="position:absolute;left:972px;top:217px;width:306px;height:712px;box-sizing:border-box;background:#ffffff;border:1px solid #d9d9d9"></div>
<div style="position:absolute;left:973px;top:199px;width:58px;height:19px;box-sizing:border-box;background:#f0f0f0;border:1px solid #d9d9d9;border-bottom:0"></div>
<div class="t" style="left:979px;top:201px;"><i class="c">下</i><i class="c">载</i><i class="c">口</i><i class="c">令</i></div>
<div style="position:absolute;left:1031px;top:197px;width:213px;height:21px;box-sizing:border-box;background:#ffffff;border:1px solid #d9d9d9;border-bottom:0"></div>
<div class="t" style="left:1037px;top:199px;"><i class="c">收</i><i class="c">到</i><i class="c">用</i><i class="c">户</i><i class="c">命</i><i class="c">令</i><i class="c">后</i><i class="c">复</i><i class="c">位</i><i class="c">到</i><span class="a">ISP</span><i class="c">监</i><i class="c">控</i><i class="c">程</i><i class="c">序</i><i class="c">区</i></div>
<div style="position:absolute;left:1248px;top:199px;width:16px;height:15px;box-sizing:border-box;background:#f0f0f0;border:1px solid #adadad"></div>
<div style="position:absolute;left:1264px;top:199px;width:16px;height:15px;box-sizing:border-box;background:#f0f0f0;border:1px solid #adadad"></div>
<div class="t" style="left:1252px;top:198px;font-size:9px">&#9664;</div><div class="t" style="left:1269px;top:198px;font-size:9px">&#9654;</div>
<div style="position:absolute;left:980px;top:225px;width:292px;height:696px;box-sizing:border-box;border:1px solid #646464;box-shadow:inset 1px 1px 0 #c4c4c4;background:#f0f0f0"></div>
<div style="position:absolute;left:986px;top:236px;width:150px;height:73px;box-sizing:border-box;border:1px solid #d5d5d5"></div>
<div style="position:absolute;left:993px;top:228px;width:100px;height:14px;background:#f0f0f0"></div>
<div class="rd" style="left:996px;top:230px"><div style="position:absolute;left:2px;top:2px;width:7px;height:7px;border-radius:50%;background:#333"></div></div>
<div class="t" style="left:1013px;top:228px;"><span class="a">USB-CDC/</span><i class="c">串</i><i class="c">口</i><i class="c">模</i><i class="c">式</i></div>
<div class="t" style="left:1006px;top:248px;"><i class="c">波</i><i class="c">特</i><i class="c">率</i></div>
<div class="cmb" style="left:1045px;top:246px;width:80px;height:19px;background:#e5e5e5;border-color:#acacac;color:#000;line-height:17px"><span class="y" style="padding-left:3px">9600</span><svg style="position:absolute;right:5px;top:50%;margin-top:-3px" width="9" height="5" viewBox="0 0 9 5" fill="none" stroke="#333" stroke-width="1"><path d="M.5 .5l4 4 4-4"/></svg></div>
<div class="t" style="left:1006px;top:269px;"><i class="c">校</i><i class="c">验</i><i class="c">位</i></div>
<div class="cmb" style="left:1045px;top:268px;width:80px;height:19px;background:#e5e5e5;border-color:#acacac;color:#000;line-height:17px"><span class="t" style="padding-left:3px"><i class="c">无</i><i class="c">校</i><i class="c">验</i></span><svg style="position:absolute;right:5px;top:50%;margin-top:-3px" width="9" height="5" viewBox="0 0 9 5" fill="none" stroke="#333" stroke-width="1"><path d="M.5 .5l4 4 4-4"/></svg></div>
<div class="cb" style="left:1045px;top:291px;border-color:#333333"><svg width="11" height="11" viewBox="0 0 11 11" style="position:absolute;left:0;top:0" fill="none" stroke="#333" stroke-width="1.1"><path d="M1.5 5.5l2.8 3 5.5-7"/></svg></div>
<div class="t" style="left:1061px;top:289px;"><span class="a">RTS</span></div>
<div class="cb" style="left:1087px;top:291px;border-color:#333333"><svg width="11" height="11" viewBox="0 0 11 11" style="position:absolute;left:0;top:0" fill="none" stroke="#333" stroke-width="1.1"><path d="M1.5 5.5l2.8 3 5.5-7"/></svg></div>
<div class="t" style="left:1103px;top:289px;"><span class="a">DTR</span></div>
<div style="position:absolute;left:1141px;top:236px;width:125px;height:73px;box-sizing:border-box;border:1px solid #d5d5d5"></div>
<div style="position:absolute;left:1150px;top:228px;width:90px;height:14px;background:#f0f0f0"></div>
<div class="rd" style="left:1152px;top:229px"></div>
<div class="t" style="left:1168px;top:228px;"><span class="a">USB(HID)</span><i class="c">模</i><i class="c">式</i></div>
<div class="t" style="left:1156px;top:248px;"><span class="a">VID</span></div>
<div class="ed" style="left:1179px;top:246px;width:49px;height:19px;background:#f0f0f0;border-color:#cccccc;color:#8d8d8d;text-align:left;line-height:17px;padding:0 3px"><span class="t"><span class="a">34BF</span></span></div>
<div class="t" style="left:1156px;top:269px;"><span class="a">PID</span></div>
<div class="ed" style="left:1179px;top:268px;width:49px;height:19px;background:#f0f0f0;border-color:#cccccc;color:#8d8d8d;text-align:left;line-height:17px;padding:0 3px"><span class="t"><span class="a">FF01</span></span></div>
<div class="t" style="left:988px;top:318px;"><i class="c">自</i><i class="c">定</i><i class="c">义</i><i class="c">命</i><i class="c">令</i></div>
<div class="ed" style="left:1053px;top:316px;width:179px;height:19px;background:#f0f0f0;border-color:#cccccc;color:#8d8d8d;text-align:left;line-height:17px;padding:0 3px"><span class="t"><span class="a">@STCISP#</span></span></div>
<div class="cb" style="left:1235px;top:320px;border-color:#cccccc"></div>
<div class="t" style="left:1251px;top:318px;color:#8d8d8d"><span class="a">Hex</span></div>
<div class="cb" style="left:986px;top:348px;border-color:#333333"><svg width="11" height="11" viewBox="0 0 11 11" style="position:absolute;left:0;top:0" fill="none" stroke="#333" stroke-width="1.1"><path d="M1.5 5.5l2.8 3 5.5-7"/></svg></div>
<div class="t" style="left:1002px;top:346px;"><i class="c">使</i><i class="c">用</i><i class="c">默</i><i class="c">认</i><i class="c">的</i><i class="c">内</i><i class="c">部</i><i class="c">自</i><i class="c">定</i><i class="c">义</i><i class="c">命</i><i class="c">令</i><span class="a">"@STCISP#"</span></div>
<div class="cb" style="left:986px;top:366px;border-color:#333333"><svg width="11" height="11" viewBox="0 0 11 11" style="position:absolute;left:0;top:0" fill="none" stroke="#333" stroke-width="1.1"><path d="M1.5 5.5l2.8 3 5.5-7"/></svg></div>
<div class="t" style="left:1002px;top:364px;"><i class="c">下</i><i class="c">次</i><i class="c">使</i><i class="c">用</i><span class="a">HID</span><i class="c">接</i><i class="c">口</i><i class="c">进</i><i class="c">行</i><span class="a">ISP</span><i class="c">下</i><i class="c">载</i></div>
<div class="cb" style="left:986px;top:384px;border-color:#333333"><svg width="11" height="11" viewBox="0 0 11 11" style="position:absolute;left:0;top:0" fill="none" stroke="#333" stroke-width="1.1"><path d="M1.5 5.5l2.8 3 5.5-7"/></svg></div>
<div class="t" style="left:1002px;top:382px;"><i class="c">每</i><i class="c">次</i><i class="c">下</i><i class="c">载</i><i class="c">前</i><i class="c">都</i><i class="c">先</i><i class="c">发</i><i class="c">送</i><i class="c">自</i><i class="c">定</i><i class="c">义</i><i class="c">命</i><i class="c">令</i></div>
<div class="btn" style="left:1022px;top:891px;width:198px;height:22px;background:#e1e1e1;border-color:#adadad;color:#000;line-height:20px"><span class="t"><i class="c">发</i><i class="c">送</i><i class="c">用</i><i class="c">户</i><i class="c">自</i><i class="c">定</i><i class="c">义</i><i class="c">命</i><i class="c">令</i><i class="c">并</i><i class="c">开</i><i class="c">始</i><i class="c">下</i><i class="c">载</i></span></div>
<div class="btn" style="left:972px;top:935px;width:108px;height:22px;background:#e1e1e1;border-color:#adadad;color:#000;line-height:20px"><span class="t"><i class="c">下</i><i class="c">载</i><span class="a">/</span><i class="c">编</i><i class="c">程</i></span></div>
<div class="btn" style="left:1087px;top:935px;width:68px;height:22px;background:#cccccc;border-color:#bfbfbf;color:#a0a0a0;line-height:20px"><span class="t"><i class="c">停</i><i class="c">止</i></span></div>
<div class="btn" style="left:1162px;top:935px;width:108px;height:20px;background:#e1e1e1;border-color:#adadad;color:#000;line-height:18px"><span class="t"><i class="c">重</i><i class="c">复</i><i class="c">编</i><i class="c">程</i></span></div>
<div class="btn" style="left:972px;top:965px;width:108px;height:23px;background:#e1e1e1;border-color:#adadad;color:#000;line-height:21px"><span class="t"><i class="c">检</i><i class="c">测</i><i class="c">选</i><i class="c">项</i></span></div>
<div class="btn" style="left:1087px;top:965px;width:68px;height:23px;background:#e1e1e1;border-color:#adadad;color:#000;line-height:21px"><span class="t"><i class="c">帮</i><i class="c">助</i></span></div>
<div class="t" style="left:1170px;top:966px;"><i class="c">重</i><i class="c">复</i><i class="c">延</i><i class="c">时</i></div>
<div class="cmb" style="left:1221px;top:965px;width:55px;height:19px;background:#ffffff;border-color:#7a7a7a;color:#000;line-height:17px"><span class="y" style="padding-left:3px"><span style="background:#0078d7;color:#fff">3 <i class="c">秒</i></span></span><svg style="position:absolute;right:5px;top:50%;margin-top:-3px" width="9" height="5" viewBox="0 0 9 5" fill="none" stroke="#333" stroke-width="1"><path d="M.5 .5l4 4 4-4"/></svg></div>
<div class="t" style="left:1170px;top:990px;"><i class="c">重</i><i class="c">复</i><i class="c">次</i><i class="c">数</i></div>
<div class="cmb" style="left:1221px;top:989px;width:55px;height:20px;background:#e5e5e5;border-color:#acacac;color:#000;line-height:18px"><span class="t" style="padding-left:3px"><i class="c">无</i><i class="c">限</i></span><svg style="position:absolute;right:5px;top:50%;margin-top:-3px" width="9" height="5" viewBox="0 0 9 5" fill="none" stroke="#333" stroke-width="1"><path d="M.5 .5l4 4 4-4"/></svg></div>
<div class="cb" style="left:971px;top:997px;border-color:#333333"><svg width="11" height="11" viewBox="0 0 11 11" style="position:absolute;left:0;top:0" fill="none" stroke="#333" stroke-width="1.1"><path d="M1.5 5.5l2.8 3 5.5-7"/></svg></div>
<div class="t" style="left:987px;top:995px;"><i class="c">每</i><i class="c">次</i><i class="c">下</i><i class="c">载</i><i class="c">前</i><i class="c">都</i><i class="c">重</i><i class="c">新</i><i class="c">装</i><i class="c">载</i><i class="c">目</i><i class="c">标</i><i class="c">文</i><i class="c">件</i></div>
<div class="cb" style="left:971px;top:1017px;border-color:#333333"><svg width="11" height="11" viewBox="0 0 11 11" style="position:absolute;left:0;top:0" fill="none" stroke="#333" stroke-width="1.1"><path d="M1.5 5.5l2.8 3 5.5-7"/></svg></div>
<div class="t" style="left:987px;top:1015px;"><i class="c">当</i><i class="c">目</i><i class="c">标</i><i class="c">文</i><i class="c">件</i><i class="c">变</i><i class="c">化</i><i class="c">时</i><i class="c">自</i><i class="c">动</i><i class="c">装</i><i class="c">载</i><i class="c">并</i><i class="c">发</i><i class="c">送</i><i class="c">下</i><i class="c">载</i><i class="c">命</i><i class="c">令</i></div>
<div style="position:absolute;left:1286px;top:81px;width:626px;height:597px;box-sizing:border-box;background:#ffffff;border:1px solid #d9d9d9"></div>
<div style="position:absolute;left:1288px;top:63px;width:60px;height:19px;box-sizing:border-box;background:#f0f0f0;border:1px solid #d9d9d9;border-bottom:0;overflow:hidden"></div>
<div class="t" style="left:1293px;top:65px;width:54px;overflow:hidden"><i class="c">程</i><i class="c">序</i><i class="c">文</i><i class="c">件</i></div>
<div style="position:absolute;left:1348px;top:63px;width:70px;height:19px;box-sizing:border-box;background:#f0f0f0;border:1px solid #d9d9d9;border-bottom:0;overflow:hidden"></div>
<div class="t" style="left:1353px;top:65px;width:64px;overflow:hidden"><span class="a">EEPROM</span><i class="c">文</i><i class="c">件</i></div>
<div style="position:absolute;left:1529px;top:63px;width:76px;height:19px;box-sizing:border-box;background:#f0f0f0;border:1px solid #d9d9d9;border-bottom:0;overflow:hidden"></div>
<div class="t" style="left:1534px;top:65px;width:70px;overflow:hidden"><span class="a">USB-HID</span><i class="c">助</i><i class="c">手</i></div>
<div style="position:absolute;left:1605px;top:63px;width:54px;height:19px;box-sizing:border-box;background:#f0f0f0;border:1px solid #d9d9d9;border-bottom:0;overflow:hidden"></div>
<div class="t" style="left:1610px;top:65px;width:48px;overflow:hidden"><span class="a">CAN</span><i class="c">助</i><i class="c">手</i></div>
<div style="position:absolute;left:1659px;top:63px;width:84px;height:19px;box-sizing:border-box;background:#f0f0f0;border:1px solid #d9d9d9;border-bottom:0;overflow:hidden"></div>
<div class="t" style="left:1664px;top:65px;width:78px;overflow:hidden"><span class="a">Keil</span><i class="c">仿</i><i class="c">真</i><i class="c">设</i><i class="c">置</i></div>
<div style="position:absolute;left:1743px;top:63px;width:60px;height:19px;box-sizing:border-box;background:#f0f0f0;border:1px solid #d9d9d9;border-bottom:0;overflow:hidden"></div>
<div class="t" style="left:1748px;top:65px;width:54px;overflow:hidden"><i class="c">范</i><i class="c">例</i><i class="c">程</i><i class="c">序</i></div>
<div style="position:absolute;left:1803px;top:63px;width:78px;height:19px;box-sizing:border-box;background:#f0f0f0;border:1px solid #d9d9d9;border-bottom:0;overflow:hidden"></div>
<div class="t" style="left:1808px;top:65px;width:72px;overflow:hidden"><span class="a">I/O</span><i class="c">口</i><i class="c">配</i><i class="c">置</i><i class="c">工</i><i class="c">具</i></div>
<div style="position:absolute;left:1418px;top:61px;width:111px;height:21px;box-sizing:border-box;background:#ffffff;border:1px solid #d9d9d9;border-bottom:0"></div>
<div class="t" style="left:1425px;top:63px;"><span class="a">CDC/HID-</span><i class="c">串</i><i class="c">口</i><i class="c">助</i><i class="c">手</i></div>
<div style="position:absolute;left:1881px;top:63px;width:16px;height:15px;box-sizing:border-box;background:#f0f0f0;border:1px solid #adadad"></div>
<div style="position:absolute;left:1896px;top:63px;width:16px;height:15px;box-sizing:border-box;background:#f0f0f0;border:1px solid #adadad"></div>
<div class="t" style="left:1885px;top:62px;font-size:9px">&#9664;</div><div class="t" style="left:1901px;top:62px;font-size:9px">&#9654;</div>
<div style="position:absolute;left:1295px;top:89px;width:610px;height:581px;box-sizing:border-box;border:1px solid #646464;box-shadow:inset 1px 1px 0 #c4c4c4;background:#f0f0f0"></div>
<div style="position:absolute;left:1301px;top:98px;width:436px;height:392px;box-sizing:border-box;border:1px solid #d5d5d5"></div>
<div style="position:absolute;left:1307px;top:91px;width:62px;height:14px;background:#f0f0f0"></div>
<div class="t" style="left:1309px;top:90px;"><i class="c">接</i><i class="c">收</i><i class="c">缓</i><i class="c">冲</i><i class="c">区</i></div>
<div class="cb" style="left:1309px;top:110px;border-color:#333333"><svg width="11" height="11" viewBox="0 0 11 11" style="position:absolute;left:0;top:0" fill="none" stroke="#333" stroke-width="1.1"><path d="M1.5 5.5l2.8 3 5.5-7"/></svg></div>
<div class="t" style="left:1325px;top:108px;"><i class="c">文</i><i class="c">本</i><i class="c">模</i><i class="c">式</i></div>
<div class="cb" style="left:1309px;top:125px;border-color:#333333"></div>
<div class="t" style="left:1325px;top:123px;"><span class="a">HEX</span><i class="c">模</i><i class="c">式</i></div>
<div class="btn" style="left:1310px;top:141px;width:78px;height:17px;background:#e1e1e1;border-color:#adadad;color:#000;line-height:15px"><span class="t"><i class="c">清</i><i class="c">空</i><i class="c">接</i><i class="c">收</i><i class="c">区</i></span></div>
<div class="btn" style="left:1310px;top:163px;width:78px;height:17px;background:#e1e1e1;border-color:#adadad;color:#000;line-height:15px"><span class="t"><i class="c">保</i><i class="c">存</i><i class="c">接</i><i class="c">收</i><i class="c">数</i><i class="c">据</i></span></div>
<div class="btn" style="left:1310px;top:185px;width:78px;height:17px;background:#e1e1e1;border-color:#adadad;color:#000;line-height:15px"><span class="t"><i class="c">复</i><i class="c">制</i><i class="c">接</i><i class="c">收</i><i class="c">数</i><i class="c">据</i></span></div>
<div class="cb" style="left:1309px;top:205px;border-color:#333333"></div>
<div class="t" style="left:1325px;top:203px;"><i class="c">接</i><i class="c">收</i><i class="c">到</i><i class="c">文</i><i class="c">件</i></div>
<div style="position:absolute;left:1394px;top:108px;width:337px;height:374px;box-sizing:border-box;background:#fff;border-left:1px solid #a0a0a0;border-top:1px solid #a0a0a0"></div>
<div class="t" style="left:1397px;top:109px;color:#000080"><span class="a">[18:12:19.397]</span><i class="c">接</i><i class="c">收</i><span style="display:inline-block;width:12px;text-align:center">&#8592;</span><span class="a">state:1</span></div>
<div class="t" style="left:1397px;top:141px;color:#000080"><span class="a">[18:12:20.367]</span><i class="c">接</i><i class="c">收</i><span style="display:inline-block;width:12px;text-align:center">&#8592;</span><span class="a">state:0</span></div>
<div class="t" style="left:1397px;top:173px;color:#000080"><span class="a">[18:12:21.409]</span><i class="c">接</i><i class="c">收</i><span style="display:inline-block;width:12px;text-align:center">&#8592;</span><span class="a">state:1</span></div>
<div class="t" style="left:1397px;top:205px;color:#000080"><span class="a">[18:12:22.134]</span><i class="c">接</i><i class="c">收</i><span style="display:inline-block;width:12px;text-align:center">&#8592;</span><span class="a">state:0</span></div>
<div class="t" style="left:1397px;top:237px;color:#000080"><span class="a">[18:12:23.102]</span><i class="c">接</i><i class="c">收</i><span style="display:inline-block;width:12px;text-align:center">&#8592;</span><span class="a">state:1</span></div>
<div class="t" style="left:1397px;top:269px;color:#000080"><span class="a">[18:12:23.863]</span><i class="c">接</i><i class="c">收</i><span style="display:inline-block;width:12px;text-align:center">&#8592;</span><span class="a">state:0</span></div>
<div style="position:absolute;left:1301px;top:492px;width:436px;height:2px;box-sizing:border-box;background:#d6e6f3"></div>
<div style="position:absolute;left:1740px;top:98px;width:2px;height:566px;box-sizing:border-box;background:#d6e6f3"></div>
<div style="position:absolute;left:1301px;top:501px;width:436px;height:98px;box-sizing:border-box;border:1px solid #d5d5d5"></div>
<div style="position:absolute;left:1307px;top:494px;width:62px;height:14px;background:#f0f0f0"></div>
<div class="t" style="left:1309px;top:493px;"><i class="c">发</i><i class="c">送</i><i class="c">缓</i><i class="c">冲</i><i class="c">区</i></div>
<div class="rd" style="left:1309px;top:511px"></div>
<div class="t" style="left:1325px;top:509px;"><i class="c">文</i><i class="c">本</i><i class="c">模</i><i class="c">式</i></div>
<div class="rd" style="left:1309px;top:526px"><div style="position:absolute;left:2px;top:2px;width:7px;height:7px;border-radius:50%;background:#333"></div></div>
<div class="t" style="left:1325px;top:524px;"><span class="a">HEX</span><i class="c">模</i><i class="c">式</i></div>
<div class="btn" style="left:1310px;top:542px;width:78px;height:17px;background:#e1e1e1;border-color:#adadad;color:#000;line-height:15px"><span class="t"><i class="c">清</i><i class="c">空</i><i class="c">发</i><i class="c">送</i><i class="c">区</i></span></div>
<div style="position:absolute;left:1394px;top:509px;width:337px;height:65px;box-sizing:border-box;background:#fff;border-left:1px solid #a0a0a0;border-top:1px solid #a0a0a0"></div>
<div class="btn" style="left:1310px;top:577px;width:54px;height:18px;background:#e1e1e1;border-color:#adadad;color:#000;line-height:16px"><span class="t"><i class="c">发</i><i class="c">送</i><i class="c">文</i><i class="c">件</i></span></div>
<div class="btn" style="left:1368px;top:577px;width:54px;height:18px;background:#e1e1e1;border-color:#adadad;color:#000;line-height:16px"><span class="t"><i class="c">发</i><i class="c">送</i><i class="c">回</i><i class="c">车</i></span></div>
<div class="btn" style="left:1426px;top:577px;width:54px;height:18px;background:#e1e1e1;border-color:#adadad;color:#000;line-height:16px"><span class="t"><i class="c">发</i><i class="c">送</i><i class="c">数</i><i class="c">据</i></span></div>
<div class="btn" style="left:1484px;top:577px;width:54px;height:18px;background:#e1e1e1;border-color:#adadad;color:#000;line-height:16px"><span class="t"><i class="c">自</i><i class="c">动</i><i class="c">发</i><i class="c">送</i></span></div>
<div class="t" style="left:1549px;top:578px;"><i class="c">周</i><i class="c">期</i><span class="a">(ms)</span></div>
<div class="ed" style="left:1599px;top:579px;width:28px;height:15px;background:#ffffff;border-color:#7a7a7a;color:#000;text-align:center;line-height:13px;padding:0 0px"><span class="y">100</span></div>
<div class="cb" style="left:1629px;top:579px;border-color:#333333"></div>
<div class="t" style="left:1645px;top:578px;"><i class="c">收</i><i class="c">发</i><i class="c">匹</i><i class="c">配</i><i class="c">测</i><i class="c">试</i></div>
<div class="t" style="left:1307px;top:609px;"><i class="c">串</i><i class="c">口</i></div>
<div class="cmb" style="left:1334px;top:607px;width:60px;height:20px;background:#cccccc;border-color:#cccccc;color:#8d8d8d;line-height:18px"><span class="t" style="padding-left:3px"><span class="a">COM18</span></span><svg style="position:absolute;right:5px;top:50%;margin-top:-3px" width="9" height="5" viewBox="0 0 9 5" fill="none" stroke="#a0a0a0" stroke-width="1"><path d="M.5 .5l4 4 4-4"/></svg></div>
<div class="t" style="left:1410px;top:609px;"><i class="c">波</i><i class="c">特</i><i class="c">率</i></div>
<div class="cmb" style="left:1449px;top:607px;width:70px;height:20px;background:#ffffff;border-color:#7a7a7a;color:#000;line-height:18px"><span class="y" style="padding-left:3px">9600</span><svg style="position:absolute;right:5px;top:50%;margin-top:-3px" width="9" height="5" viewBox="0 0 9 5" fill="none" stroke="#333" stroke-width="1"><path d="M.5 .5l4 4 4-4"/></svg></div>
<div class="t" style="left:1526px;top:609px;"><i class="c">校</i><i class="c">验</i><i class="c">位</i></div>
<div class="cmb" style="left:1564px;top:607px;width:65px;height:20px;background:#e5e5e5;border-color:#acacac;color:#000;line-height:18px"><span class="t" style="padding-left:3px"><i class="c">无</i><i class="c">校</i><i class="c">验</i></span><svg style="position:absolute;right:5px;top:50%;margin-top:-3px" width="9" height="5" viewBox="0 0 9 5" fill="none" stroke="#333" stroke-width="1"><path d="M.5 .5l4 4 4-4"/></svg></div>
<div class="t" style="left:1636px;top:609px;"><i class="c">停</i><i class="c">止</i><i class="c">位</i></div>
<div class="cmb" style="left:1674px;top:607px;width:60px;height:20px;background:#e5e5e5;border-color:#acacac;color:#000;line-height:18px"><span class="y" style="padding-left:3px">1<i class="c">位</i></span><svg style="position:absolute;right:5px;top:50%;margin-top:-3px" width="9" height="5" viewBox="0 0 9 5" fill="none" stroke="#333" stroke-width="1"><path d="M.5 .5l4 4 4-4"/></svg></div>
<div class="btn" style="left:1302px;top:634px;width:63px;height:28px;background:#e1e1e1;border-color:#adadad;color:#000;line-height:26px"><span class="t"><i class="c">关</i><i class="c">闭</i><i class="c">串</i><i class="c">口</i></span></div>
<div class="cb" style="left:1371px;top:634px;border-color:#333333"></div>
<div class="t" style="left:1387px;top:632px;"><i class="c">编</i><i class="c">程</i><i class="c">完</i><i class="c">自</i><i class="c">动</i><i class="c">打</i><i class="c">开</i></div>
<div class="cb" style="left:1371px;top:650px;border-color:#333333"></div>
<div class="t" style="left:1387px;top:648px;"><i class="c">自</i><i class="c">动</i><i class="c">发</i><i class="c">送</i><i class="c">结</i><i class="c">束</i><i class="c">符</i></div>
<div class="btn" style="left:1477px;top:634px;width:63px;height:28px;background:#e1e1e1;border-color:#adadad;color:#000;line-height:26px"><span class="t"><i class="c">更</i><i class="c">多</i><i class="c">设</i><i class="c">置</i></span></div>
<div class="t" style="left:1547px;top:631px;"><i class="c">发</i><i class="c">送</i></div>
<div class="ed" style="left:1573px;top:631px;width:120px;height:16px;background:#f0f0f0;border-color:#7a7a7a;color:#000;text-align:right;line-height:14px;padding:0 6px"><span class="y">32957</span></div>
<div class="t" style="left:1547px;top:649px;"><i class="c">接</i><i class="c">收</i></div>
<div class="ed" style="left:1573px;top:649px;width:120px;height:16px;background:#f0f0f0;border-color:#7a7a7a;color:#000;text-align:right;line-height:14px;padding:0 6px"><span class="y">23144</span></div>
<div class="btn" style="left:1696px;top:648px;width:38px;height:18px;background:#e1e1e1;border-color:#adadad;color:#000;line-height:16px"><span class="t"><i class="c">清</i><i class="c">零</i></span></div>
<div style="position:absolute;left:1744px;top:99px;width:154px;height:566px;box-sizing:border-box;border:1px solid #d5d5d5"></div>
<div style="position:absolute;left:1750px;top:92px;width:76px;height:14px;background:#f0f0f0"></div>
<div class="t" style="left:1752px;top:91px;"><i class="c">多</i><i class="c">字</i><i class="c">符</i><i class="c">串</i><i class="c">发</i><i class="c">送</i></div>
<div class="cb" style="left:1748px;top:106px;border-color:#333333"><svg width="11" height="11" viewBox="0 0 11 11" style="position:absolute;left:0;top:0" fill="none" stroke="#333" stroke-width="1.1"><path d="M1.5 5.5l2.8 3 5.5-7"/></svg></div>
<div class="t" style="left:1764px;top:104px;"><i class="c">发</i><i class="c">送</i></div>
<div class="t" style="left:1866px;top:104px;"><span class="a">HEX</span></div>
<div class="cb" style="left:1748px;top:123px;border-color:#333333"><svg width="11" height="11" viewBox="0 0 11 11" style="position:absolute;left:0;top:0" fill="none" stroke="#333" stroke-width="1.1"><path d="M1.5 5.5l2.8 3 5.5-7"/></svg></div>
<div class="btn" style="left:1764px;top:121px;width:20px;height:17px;background:#e1e1e1;border-color:#adadad;color:#000;line-height:15px"><span class="y">1</span></div>
<div class="ed" style="left:1789px;top:121px;width:76px;height:18px;background:#ffffff;border-color:#7a7a7a;color:#000;text-align:left;line-height:16px;padding:0 2px"><span class="t"><span class="a">FE 05 00 00</span></span></div>
<div class="cb" style="left:1867px;top:123px;border-color:#333333"><svg width="11" height="11" viewBox="0 0 11 11" style="position:absolute;left:0;top:0" fill="none" stroke="#333" stroke-width="1.1"><path d="M1.5 5.5l2.8 3 5.5-7"/></svg></div>
<div class="cb" style="left:1748px;top:143px;border-color:#333333"><svg width="11" height="11" viewBox="0 0 11 11" style="position:absolute;left:0;top:0" fill="none" stroke="#333" stroke-width="1.1"><path d="M1.5 5.5l2.8 3 5.5-7"/></svg></div>
<div class="btn" style="left:1764px;top:141px;width:20px;height:17px;background:#e1e1e1;border-color:#adadad;color:#000;line-height:15px"><span class="y">2</span></div>
<div class="ed" style="left:1789px;top:141px;width:76px;height:18px;background:#ffffff;border-color:#7a7a7a;color:#000;text-align:left;line-height:16px;padding:0 2px"><span class="t"><span class="a">FE 05 00 00</span></span></div>
<div class="cb" style="left:1867px;top:143px;border-color:#333333"><svg width="11" height="11" viewBox="0 0 11 11" style="position:absolute;left:0;top:0" fill="none" stroke="#333" stroke-width="1.1"><path d="M1.5 5.5l2.8 3 5.5-7"/></svg></div>
<div class="cb" style="left:1748px;top:163px;border-color:#333333"><svg width="11" height="11" viewBox="0 0 11 11" style="position:absolute;left:0;top:0" fill="none" stroke="#333" stroke-width="1.1"><path d="M1.5 5.5l2.8 3 5.5-7"/></svg></div>
<div class="btn" style="left:1764px;top:161px;width:20px;height:17px;background:#e1e1e1;border-color:#adadad;color:#000;line-height:15px"><span class="y">3</span></div>
<div class="ed" style="left:1789px;top:161px;width:76px;height:18px;background:#ffffff;border-color:#7a7a7a;color:#000;text-align:left;line-height:16px;padding:0 2px"><span class="t"><span class="a">FE 05 00 01</span></span></div>
<div class="cb" style="left:1867px;top:163px;border-color:#333333"><svg width="11" height="11" viewBox="0 0 11 11" style="position:absolute;left:0;top:0" fill="none" stroke="#333" stroke-width="1.1"><path d="M1.5 5.5l2.8 3 5.5-7"/></svg></div>
<div class="cb" style="left:1748px;top:183px;border-color:#333333"><svg width="11" height="11" viewBox="0 0 11 11" style="position:absolute;left:0;top:0" fill="none" stroke="#333" stroke-width="1.1"><path d="M1.5 5.5l2.8 3 5.5-7"/></svg></div>
<div class="btn" style="left:1764px;top:181px;width:20px;height:17px;background:#e1e1e1;border-color:#adadad;color:#000;line-height:15px"><span class="y">4</span></div>
<div class="ed" style="left:1789px;top:181px;width:76px;height:18px;background:#ffffff;border-color:#7a7a7a;color:#000;text-align:left;line-height:16px;padding:0 2px"><span class="t"><span class="a">FE 05 00 01</span></span></div>
<div class="cb" style="left:1867px;top:183px;border-color:#333333"><svg width="11" height="11" viewBox="0 0 11 11" style="position:absolute;left:0;top:0" fill="none" stroke="#333" stroke-width="1.1"><path d="M1.5 5.5l2.8 3 5.5-7"/></svg></div>
<div class="cb" style="left:1748px;top:203px;border-color:#333333"><svg width="11" height="11" viewBox="0 0 11 11" style="position:absolute;left:0;top:0" fill="none" stroke="#333" stroke-width="1.1"><path d="M1.5 5.5l2.8 3 5.5-7"/></svg></div>
<div class="btn" style="left:1764px;top:201px;width:20px;height:17px;background:#e1e1e1;border-color:#adadad;color:#000;line-height:15px"><span class="y">5</span></div>
<div class="ed" style="left:1789px;top:201px;width:76px;height:18px;background:#ffffff;border-color:#7a7a7a;color:#000;text-align:left;line-height:16px;padding:0 2px"><span class="t"><span class="a">FE 0F 00 00</span></span></div>
<div class="cb" style="left:1867px;top:203px;border-color:#333333"><svg width="11" height="11" viewBox="0 0 11 11" style="position:absolute;left:0;top:0" fill="none" stroke="#333" stroke-width="1.1"><path d="M1.5 5.5l2.8 3 5.5-7"/></svg></div>
<div class="cb" style="left:1748px;top:223px;border-color:#333333"><svg width="11" height="11" viewBox="0 0 11 11" style="position:absolute;left:0;top:0" fill="none" stroke="#333" stroke-width="1.1"><path d="M1.5 5.5l2.8 3 5.5-7"/></svg></div>
<div class="btn" style="left:1764px;top:221px;width:20px;height:17px;background:#e1e1e1;border-color:#adadad;color:#000;line-height:15px"><span class="y">6</span></div>
<div class="ed" style="left:1789px;top:221px;width:76px;height:18px;background:#ffffff;border-color:#7a7a7a;color:#000;text-align:left;line-height:16px;padding:0 2px"><span class="t"><span class="a">FE 0F 00 00</span></span></div>
<div class="cb" style="left:1867px;top:223px;border-color:#333333"><svg width="11" height="11" viewBox="0 0 11 11" style="position:absolute;left:0;top:0" fill="none" stroke="#333" stroke-width="1.1"><path d="M1.5 5.5l2.8 3 5.5-7"/></svg></div>
<div class="cb" style="left:1748px;top:243px;border-color:#333333"><svg width="11" height="11" viewBox="0 0 11 11" style="position:absolute;left:0;top:0" fill="none" stroke="#333" stroke-width="1.1"><path d="M1.5 5.5l2.8 3 5.5-7"/></svg></div>
<div class="btn" style="left:1764px;top:241px;width:20px;height:17px;background:#e1e1e1;border-color:#adadad;color:#000;line-height:15px"><span class="y">7</span></div>
<div class="ed" style="left:1789px;top:241px;width:76px;height:18px;background:#ffffff;border-color:#7a7a7a;color:#000;text-align:left;line-height:16px;padding:0 2px"><span class="t"></span></div>
<div class="cb" style="left:1867px;top:243px;border-color:#333333"></div>
<div class="cb" style="left:1748px;top:263px;border-color:#333333"><svg width="11" height="11" viewBox="0 0 11 11" style="position:absolute;left:0;top:0" fill="none" stroke="#333" stroke-width="1.1"><path d="M1.5 5.5l2.8 3 5.5-7"/></svg></div>
<div class="btn" style="left:1764px;top:261px;width:20px;height:17px;background:#e1e1e1;border-color:#adadad;color:#000;line-height:15px"><span class="y">8</span></div>
<div class="ed" style="left:1789px;top:261px;width:76px;height:18px;background:#ffffff;border-color:#7a7a7a;color:#000;text-align:left;line-height:16px;padding:0 2px"><span class="t"><span class="a">FE 01 00 00</span></span></div>
<div class="cb" style="left:1867px;top:263px;border-color:#333333"><svg width="11" height="11" viewBox="0 0 11 11" style="position:absolute;left:0;top:0" fill="none" stroke="#333" stroke-width="1.1"><path d="M1.5 5.5l2.8 3 5.5-7"/></svg></div>
<div class="cb" style="left:1748px;top:283px;border-color:#333333"><svg width="11" height="11" viewBox="0 0 11 11" style="position:absolute;left:0;top:0" fill="none" stroke="#333" stroke-width="1.1"><path d="M1.5 5.5l2.8 3 5.5-7"/></svg></div>
<div class="btn" style="left:1764px;top:281px;width:20px;height:17px;background:#e1e1e1;border-color:#adadad;color:#000;line-height:15px"><span class="y">9</span></div>
<div class="ed" style="left:1789px;top:281px;width:76px;height:18px;background:#ffffff;border-color:#7a7a7a;color:#000;text-align:left;line-height:16px;padding:0 2px"><span class="t"><span class="a">FE 02 00 00</span></span></div>
<div class="cb" style="left:1867px;top:283px;border-color:#333333"><svg width="11" height="11" viewBox="0 0 11 11" style="position:absolute;left:0;top:0" fill="none" stroke="#333" stroke-width="1.1"><path d="M1.5 5.5l2.8 3 5.5-7"/></svg></div>
<div class="cb" style="left:1748px;top:303px;border-color:#333333"><svg width="11" height="11" viewBox="0 0 11 11" style="position:absolute;left:0;top:0" fill="none" stroke="#333" stroke-width="1.1"><path d="M1.5 5.5l2.8 3 5.5-7"/></svg></div>
<div class="btn" style="left:1764px;top:301px;width:20px;height:17px;background:#e1e1e1;border-color:#adadad;color:#000;line-height:15px"><span class="y">10</span></div>
<div class="ed" style="left:1789px;top:301px;width:76px;height:18px;background:#ffffff;border-color:#7a7a7a;color:#000;text-align:left;line-height:16px;padding:0 2px"><span class="t"></span></div>
<div class="cb" style="left:1867px;top:303px;border-color:#333333"></div>
<div class="cb" style="left:1748px;top:323px;border-color:#333333"><svg width="11" height="11" viewBox="0 0 11 11" style="position:absolute;left:0;top:0" fill="none" stroke="#333" stroke-width="1.1"><path d="M1.5 5.5l2.8 3 5.5-7"/></svg></div>
<div class="btn" style="left:1764px;top:321px;width:20px;height:17px;background:#e1e1e1;border-color:#adadad;color:#000;line-height:15px"><span class="y">11</span></div>
<div class="ed" style="left:1789px;top:321px;width:76px;height:18px;background:#ffffff;border-color:#7a7a7a;color:#000;text-align:left;line-height:16px;padding:0 2px"><span class="t"><span class="a">00 03 00 02</span></span></div>
<div class="cb" style="left:1867px;top:323px;border-color:#333333"><svg width="11" height="11" viewBox="0 0 11 11" style="position:absolute;left:0;top:0" fill="none" stroke="#333" stroke-width="1.1"><path d="M1.5 5.5l2.8 3 5.5-7"/></svg></div>
<div class="cb" style="left:1748px;top:343px;border-color:#333333"><svg width="11" height="11" viewBox="0 0 11 11" style="position:absolute;left:0;top:0" fill="none" stroke="#333" stroke-width="1.1"><path d="M1.5 5.5l2.8 3 5.5-7"/></svg></div>
<div class="btn" style="left:1764px;top:341px;width:20px;height:17px;background:#e1e1e1;border-color:#adadad;color:#000;line-height:15px"><span class="y">12</span></div>
<div class="ed" style="left:1789px;top:341px;width:76px;height:18px;background:#ffffff;border-color:#7a7a7a;color:#000;text-align:left;line-height:16px;padding:0 2px"><span class="t"><span class="a">FE 10 00 03</span></span></div>
<div class="cb" style="left:1867px;top:343px;border-color:#333333"><svg width="11" height="11" viewBox="0 0 11 11" style="position:absolute;left:0;top:0" fill="none" stroke="#333" stroke-width="1.1"><path d="M1.5 5.5l2.8 3 5.5-7"/></svg></div>
<div class="cb" style="left:1748px;top:363px;border-color:#333333"><svg width="11" height="11" viewBox="0 0 11 11" style="position:absolute;left:0;top:0" fill="none" stroke="#333" stroke-width="1.1"><path d="M1.5 5.5l2.8 3 5.5-7"/></svg></div>
<div class="btn" style="left:1764px;top:361px;width:20px;height:17px;background:#e1e1e1;border-color:#adadad;color:#000;line-height:15px"><span class="y">13</span></div>
<div class="ed" style="left:1789px;top:361px;width:76px;height:18px;background:#ffffff;border-color:#7a7a7a;color:#000;text-align:left;line-height:16px;padding:0 2px"><span class="t"></span></div>
<div class="cb" style="left:1867px;top:363px;border-color:#333333"></div>
<div class="cb" style="left:1748px;top:383px;border-color:#333333"><svg width="11" height="11" viewBox="0 0 11 11" style="position:absolute;left:0;top:0" fill="none" stroke="#333" stroke-width="1.1"><path d="M1.5 5.5l2.8 3 5.5-7"/></svg></div>
<div class="btn" style="left:1764px;top:381px;width:20px;height:17px;background:#e1e1e1;border-color:#adadad;color:#000;line-height:15px"><span class="y">14</span></div>
<div class="ed" style="left:1789px;top:381px;width:76px;height:18px;background:#ffffff;border-color:#7a7a7a;color:#000;text-align:left;line-height:16px;padding:0 2px"><span class="t"></span></div>
<div class="cb" style="left:1867px;top:383px;border-color:#333333"></div>
<div class="cb" style="left:1748px;top:403px;border-color:#333333"><svg width="11" height="11" viewBox="0 0 11 11" style="position:absolute;left:0;top:0" fill="none" stroke="#333" stroke-width="1.1"><path d="M1.5 5.5l2.8 3 5.5-7"/></svg></div>
<div class="btn" style="left:1764px;top:401px;width:20px;height:17px;background:#e1e1e1;border-color:#adadad;color:#000;line-height:15px"><span class="y">15</span></div>
<div class="ed" style="left:1789px;top:401px;width:76px;height:18px;background:#ffffff;border-color:#7a7a7a;color:#000;text-align:left;line-height:16px;padding:0 2px"><span class="t"></span></div>
<div class="cb" style="left:1867px;top:403px;border-color:#333333"></div>
<div class="cb" style="left:1748px;top:423px;border-color:#333333"><svg width="11" height="11" viewBox="0 0 11 11" style="position:absolute;left:0;top:0" fill="none" stroke="#333" stroke-width="1.1"><path d="M1.5 5.5l2.8 3 5.5-7"/></svg></div>
<div class="btn" style="left:1764px;top:421px;width:20px;height:17px;background:#e1e1e1;border-color:#adadad;color:#000;line-height:15px"><span class="y">16</span></div>
<div class="ed" style="left:1789px;top:421px;width:76px;height:18px;background:#ffffff;border-color:#7a7a7a;color:#000;text-align:left;line-height:16px;padding:0 2px"><span class="t"></span></div>
<div class="cb" style="left:1867px;top:423px;border-color:#333333"></div>
<div class="cb" style="left:1748px;top:443px;border-color:#333333"><svg width="11" height="11" viewBox="0 0 11 11" style="position:absolute;left:0;top:0" fill="none" stroke="#333" stroke-width="1.1"><path d="M1.5 5.5l2.8 3 5.5-7"/></svg></div>
<div class="btn" style="left:1764px;top:441px;width:20px;height:17px;background:#e1e1e1;border-color:#adadad;color:#000;line-height:15px"><span class="y">17</span></div>
<div class="ed" style="left:1789px;top:441px;width:76px;height:18px;background:#ffffff;border-color:#7a7a7a;color:#000;text-align:left;line-height:16px;padding:0 2px"><span class="t"></span></div>
<div class="cb" style="left:1867px;top:443px;border-color:#333333"></div>
<div class="cb" style="left:1748px;top:463px;border-color:#333333"><svg width="11" height="11" viewBox="0 0 11 11" style="position:absolute;left:0;top:0" fill="none" stroke="#333" stroke-width="1.1"><path d="M1.5 5.5l2.8 3 5.5-7"/></svg></div>
<div class="btn" style="left:1764px;top:461px;width:20px;height:17px;background:#e1e1e1;border-color:#adadad;color:#000;line-height:15px"><span class="y">18</span></div>
<div class="ed" style="left:1789px;top:461px;width:76px;height:18px;background:#ffffff;border-color:#7a7a7a;color:#000;text-align:left;line-height:16px;padding:0 2px"><span class="t"></span></div>
<div class="cb" style="left:1867px;top:463px;border-color:#333333"></div>
<div class="cb" style="left:1748px;top:483px;border-color:#333333"><svg width="11" height="11" viewBox="0 0 11 11" style="position:absolute;left:0;top:0" fill="none" stroke="#333" stroke-width="1.1"><path d="M1.5 5.5l2.8 3 5.5-7"/></svg></div>
<div class="btn" style="left:1764px;top:481px;width:20px;height:17px;background:#e1e1e1;border-color:#adadad;color:#000;line-height:15px"><span class="y">19</span></div>
<div class="ed" style="left:1789px;top:481px;width:76px;height:18px;background:#ffffff;border-color:#7a7a7a;color:#000;text-align:left;line-height:16px;padding:0 2px"><span class="t"></span></div>
<div class="cb" style="left:1867px;top:483px;border-color:#333333"></div>
<div class="cb" style="left:1748px;top:503px;border-color:#333333"><svg width="11" height="11" viewBox="0 0 11 11" style="position:absolute;left:0;top:0" fill="none" stroke="#333" stroke-width="1.1"><path d="M1.5 5.5l2.8 3 5.5-7"/></svg></div>
<div class="btn" style="left:1764px;top:501px;width:20px;height:17px;background:#e1e1e1;border-color:#adadad;color:#000;line-height:15px"><span class="y">20</span></div>
<div class="ed" style="left:1789px;top:501px;width:76px;height:18px;background:#ffffff;border-color:#7a7a7a;color:#000;text-align:left;line-height:16px;padding:0 2px"><span class="t"></span></div>
<div class="cb" style="left:1867px;top:503px;border-color:#333333"></div>
<div class="cb" style="left:1748px;top:523px;border-color:#333333"><svg width="11" height="11" viewBox="0 0 11 11" style="position:absolute;left:0;top:0" fill="none" stroke="#333" stroke-width="1.1"><path d="M1.5 5.5l2.8 3 5.5-7"/></svg></div>
<div class="btn" style="left:1764px;top:521px;width:20px;height:17px;background:#e1e1e1;border-color:#adadad;color:#000;line-height:15px"><span class="y">21</span></div>
<div class="ed" style="left:1789px;top:521px;width:76px;height:18px;background:#ffffff;border-color:#7a7a7a;color:#000;text-align:left;line-height:16px;padding:0 2px"><span class="t"></span></div>
<div class="cb" style="left:1867px;top:523px;border-color:#333333"></div>
<div class="cb" style="left:1748px;top:543px;border-color:#333333"><svg width="11" height="11" viewBox="0 0 11 11" style="position:absolute;left:0;top:0" fill="none" stroke="#333" stroke-width="1.1"><path d="M1.5 5.5l2.8 3 5.5-7"/></svg></div>
<div class="btn" style="left:1764px;top:541px;width:20px;height:17px;background:#e1e1e1;border-color:#adadad;color:#000;line-height:15px"><span class="y">22</span></div>
<div class="ed" style="left:1789px;top:541px;width:76px;height:18px;background:#ffffff;border-color:#7a7a7a;color:#000;text-align:left;line-height:16px;padding:0 2px"><span class="t"></span></div>
<div class="cb" style="left:1867px;top:543px;border-color:#333333"></div>
<div style="position:absolute;left:1883px;top:121px;width:13px;height:439px;box-sizing:border-box;background:#f0f0f0"></div>
<div style="position:absolute;left:1884px;top:137px;width:11px;height:44px;box-sizing:border-box;background:#cdcdcd"></div>
<svg style="position:absolute;left:1885px;top:126px" width="9" height="6" viewBox="0 0 9 6" fill="none" stroke="#606060" stroke-width="1.5"><path d="M.5 5.5l4-4 4 4"/></svg>
<svg style="position:absolute;left:1885px;top:548px" width="9" height="6" viewBox="0 0 9 6" fill="none" stroke="#606060" stroke-width="1.5"><path d="M.5 .5l4 4 4-4"/></svg>
<div class="cb" style="left:1748px;top:562px;border-color:#333333"></div>
<div class="t" style="left:1764px;top:560px;"><i class="c">关</i><i class="c">闭</i><i class="c">提</i><i class="c">示</i></div>
<div class="btn" style="left:1749px;top:582px;width:90px;height:18px;background:#e1e1e1;border-color:#adadad;color:#000;line-height:16px"><span class="t"><i class="c">清</i><i class="c">空</i><i class="c">全</i><i class="c">部</i><i class="c">数</i><i class="c">据</i></span></div>
<div class="btn" style="left:1749px;top:604px;width:90px;height:18px;background:#e1e1e1;border-color:#adadad;color:#000;line-height:16px"><span class="t"><i class="c">自</i><i class="c">动</i><i class="c">循</i><i class="c">环</i><i class="c">发</i><i class="c">送</i></span></div>
<div class="t" style="left:1750px;top:628px;"><i class="c">间</i><i class="c">隔</i><i class="c">时</i><i class="c">间</i></div>
<div class="ed" style="left:1800px;top:628px;width:40px;height:16px;background:#ffffff;border-color:#7a7a7a;color:#000;text-align:right;line-height:14px;padding:0 5px"><span class="y">0</span></div>
<div class="t" style="left:1843px;top:628px;"><span class="a">ms</span></div>
<div class="t" style="left:1750px;top:646px;"><i class="c">循</i><i class="c">环</i><i class="c">次</i><i class="c">数</i></div>
<div class="ed" style="left:1800px;top:646px;width:40px;height:16px;background:#f0f0f0;border-color:#7a7a7a;color:#000;text-align:center;line-height:14px;padding:0 0px"><span class="y">0</span></div>
<div style="position:absolute;left:1286px;top:682px;width:627px;height:2px;box-sizing:border-box;background:#d6e6f3"></div>
<div style="position:absolute;left:1286px;top:687px;width:627px;height:290px;box-sizing:border-box;background:#fff;border-left:1px solid #828790;border-top:1px solid #828790"></div>
<div class="t" style="left:1300px;top:688px">.</div>
<div class="t" style="left:1312px;top:688px"><span class="a">P3.2</span><i class="c">和</i><span class="a">P3.3</span><i class="c">与</i><i class="c">下</i><i class="c">次</i><i class="c">下</i><i class="c">载</i><i class="c">无</i><i class="c">关</i></div>
<div class="t" style="left:1300px;top:704px">.</div>
<div class="t" style="left:1312px;top:704px"><i class="c">上</i><i class="c">电</i><i class="c">复</i><i class="c">位</i><i class="c">时</i><i class="c">增</i><i class="c">加</i><i class="c">额</i><i class="c">外</i><i class="c">的</i><i class="c">复</i><i class="c">位</i><i class="c">延</i><i class="c">时</i></div>
<div class="t" style="left:1300px;top:720px">.</div>
<div class="t" style="left:1312px;top:720px"><i class="c">复</i><i class="c">位</i><i class="c">引</i><i class="c">脚</i><i class="c">用</i><i class="c">作</i><i class="c">普</i><i class="c">通</i><span class="a">I/O</span><i class="c">口</i></div>
<div class="t" style="left:1300px;top:736px">.</div>
<div class="t" style="left:1312px;top:736px"><i class="c">检</i><i class="c">测</i><i class="c">到</i><i class="c">低</i><i class="c">压</i><i class="c">时</i><i class="c">复</i><i class="c">位</i></div>
<div class="t" style="left:1300px;top:752px">.</div>
<div class="t" style="left:1312px;top:752px"><i class="c">低</i><i class="c">压</i><i class="c">检</i><i class="c">测</i><i class="c">门</i><i class="c">槛</i><i class="c">电</i><i class="c">压</i><span class="a"> : 2.00 V</span></div>
<div class="t" style="left:1300px;top:768px">.</div>
<div class="t" style="left:1312px;top:768px"><i class="c">上</i><i class="c">电</i><i class="c">复</i><i class="c">位</i><i class="c">时</i><span class="a">,</span><i class="c">硬</i><i class="c">件</i><i class="c">不</i><i class="c">启</i><i class="c">动</i><i class="c">内</i><i class="c">部</i><i class="c">看</i><i class="c">门</i><i class="c">狗</i></div>
<div class="t" style="left:1300px;top:784px">.</div>
<div class="t" style="left:1312px;top:784px"><i class="c">上</i><i class="c">电</i><i class="c">自</i><i class="c">动</i><i class="c">启</i><i class="c">动</i><i class="c">内</i><i class="c">部</i><i class="c">看</i><i class="c">门</i><i class="c">狗</i><i class="c">时</i><i class="c">的</i><i class="c">预</i><i class="c">分</i><i class="c">频</i><i class="c">数</i><i class="c">为</i><span class="a"> : 256</span></div>
<div class="t" style="left:1300px;top:800px">.</div>
<div class="t" style="left:1312px;top:800px"><i class="c">空</i><i class="c">闲</i><i class="c">状</i><i class="c">态</i><i class="c">时</i><i class="c">看</i><i class="c">门</i><i class="c">狗</i><i class="c">定</i><i class="c">时</i><i class="c">器</i><i class="c">停</i><i class="c">止</i><i class="c">计</i><i class="c">数</i></div>
<div class="t" style="left:1300px;top:816px">.</div>
<div class="t" style="left:1312px;top:816px"><i class="c">下</i><i class="c">次</i><i class="c">下</i><i class="c">载</i><i class="c">用</i><i class="c">户</i><i class="c">程</i><i class="c">序</i><i class="c">时</i><span class="a">,</span><i class="c">将</i><i class="c">用</i><i class="c">户</i><span class="a">EEPROM</span><i class="c">区</i><i class="c">一</i><i class="c">并</i><i class="c">擦</i><i class="c">除</i></div>
<div class="t" style="left:1300px;top:832px">.</div>
<div class="t" style="left:1312px;top:832px"><i class="c">下</i><i class="c">次</i><i class="c">下</i><i class="c">载</i><i class="c">用</i><i class="c">户</i><i class="c">程</i><i class="c">序</i><i class="c">时</i><span class="a">,</span><i class="c">没</i><i class="c">有</i><i class="c">相</i><i class="c">关</i><i class="c">的</i><i class="c">端</i><i class="c">口</i><i class="c">控</i><i class="c">制</i><span class="a">485</span></div>
<div class="t" style="left:1300px;top:848px">.</div>
<div class="t" style="left:1312px;top:848px"><i class="c">下</i><i class="c">次</i><i class="c">下</i><i class="c">载</i><i class="c">时</i><i class="c">不</i><i class="c">需</i><i class="c">要</i><i class="c">校</i><i class="c">验</i><i class="c">下</i><i class="c">载</i><i class="c">口</i><i class="c">令</i></div>
<div class="t" style="left:1300px;top:864px">.</div>
<div class="t" style="left:1312px;top:864px"><i class="c">内</i><i class="c">部</i><i class="c">参</i><i class="c">考</i><i class="c">电</i><i class="c">压</i><span class="a">: 1192 mV (</span><i class="c">参</i><i class="c">考</i><i class="c">范</i><i class="c">围</i><span class="a">: 1100~1300mV)</span></div>
<div class="t" style="left:1288px;top:880px"><i class="c">芯</i><i class="c">片</i><i class="c">出</i><i class="c">厂</i><i class="c">序</i><i class="c">列</i><i class="c">号</i><span class="a"> : 78B4C9CB08AE41</span></div>
<div class="t" style="left:1300px;top:912px"><i class="c">单</i><i class="c">片</i><i class="c">机</i><i class="c">型</i><i class="c">号</i><span class="a">: AI8051U-34K64</span></div>
<div class="t" style="left:1288px;top:944px"><i class="c">操</i><i class="c">作</i><i class="c">成</i><i class="c">功</i><span class="a"> !(2025-12-13 18:12:05)</span></div>
<div style="position:absolute;left:1897px;top:688px;width:16px;height:288px;box-sizing:border-box;background:#f0f0f0"></div>
<div style="position:absolute;left:1898px;top:872px;width:14px;height:86px;box-sizing:border-box;background:#cdcdcd"></div>
<svg style="position:absolute;left:1900px;top:694px" width="9" height="6" viewBox="0 0 9 6" fill="none" stroke="#606060" stroke-width="1.5"><path d="M.5 5.5l4-4 4 4"/></svg>
<svg style="position:absolute;left:1900px;top:965px" width="9" height="6" viewBox="0 0 9 6" fill="none" stroke="#606060" stroke-width="1.5"><path d="M.5 .5l4 4 4-4"/></svg>
<div class="ed" style="left:1286px;top:984px;width:627px;height:20px;background:#f0f0f0;border-color:#7a7a7a;color:#000;text-align:left;line-height:18px;padding:0 3px"><span class="t"><span class="a">F:\ProjectCode\STC\Ai8051U\04_GPIO\vs_workspace\build\Target 1\sample.hex</span></span></div>
<div class="btn" style="left:1287px;top:1010px;width:123px;height:23px;background:#e1e1e1;border-color:#adadad;color:#000;line-height:21px"><span class="t"><i class="c">远</i><i class="c">程</i><i class="c">现</i><i class="c">场</i><i class="c">升</i><i class="c">级</i><span class="a">APP</span><i class="c">发</i><i class="c">布</i></span></div>
<div class="btn" style="left:1415px;top:1010px;width:73px;height:23px;background:#e1e1e1;border-color:#adadad;color:#000;line-height:21px"><span class="t"><i class="c">发</i><i class="c">布</i><span class="a">APP</span><i class="c">帮</i><i class="c">助</i></span></div>
<div class="btn" style="left:1493px;top:1010px;width:93px;height:23px;background:#e1e1e1;border-color:#adadad;color:#000;line-height:21px"><span class="t"><i class="c">读</i><i class="c">取</i><i class="c">本</i><i class="c">机</i><i class="c">硬</i><i class="c">盘</i><i class="c">号</i></span></div>
<div class="btn" style="left:1591px;top:1010px;width:33px;height:23px;background:#e1e1e1;border-color:#adadad;color:#000;line-height:21px"><span class="t"><i class="c">清</i><i class="c">除</i></span></div>
<div class="btn" style="left:1629px;top:1010px;width:63px;height:23px;background:#e1e1e1;border-color:#adadad;color:#000;line-height:21px"><span class="t"><i class="c">动</i><i class="c">态</i><i class="c">信</i><i class="c">息</i></span></div>
<div class="cb" style="left:1724px;top:1014px;border-color:#333333"><svg width="11" height="11" viewBox="0 0 11 11" style="position:absolute;left:0;top:0" fill="none" stroke="#333" stroke-width="1.1"><path d="M1.5 5.5l2.8 3 5.5-7"/></svg></div>
<div class="t" style="left:1740px;top:1013px;"><i class="c">提</i><i class="c">示</i><i class="c">音</i></div>
<div class="t" style="left:1786px;top:1013px;"><i class="c">成</i><i class="c">功</i><i class="c">计</i><i class="c">数</i></div>
<div class="ed" style="left:1836px;top:1011px;width:40px;height:20px;background:#ffffff;border-color:#7a7a7a;color:#000;text-align:center;line-height:18px;padding:0 0px"><span class="y">52</span></div>
<div class="btn" style="left:1880px;top:1012px;width:33px;height:18px;background:#e1e1e1;border-color:#adadad;color:#000;line-height:16px"><span class="t"><i class="c">清</i><i class="c">零</i></span></div>
<div style="position:absolute;z-index:10;left:1631px;top:943px;font-size:21px;line-height:24px;color:rgba(128,128,128,0.5);white-space:nowrap"><i class="c">激</i><i class="c">活</i> Windows</div>
<div style="position:absolute;z-index:10;left:1631px;top:971px;font-size:15.5px;line-height:17px;color:rgba(128,128,128,0.4);white-space:nowrap"><i class="c">转</i><i class="c">到</i>“<i class="c">设</i><i class="c">置</i>”<i class="c">以</i><i class="c">激</i><i class="c">活</i> Windows<i class="c">。</i></div>
</body></html>
